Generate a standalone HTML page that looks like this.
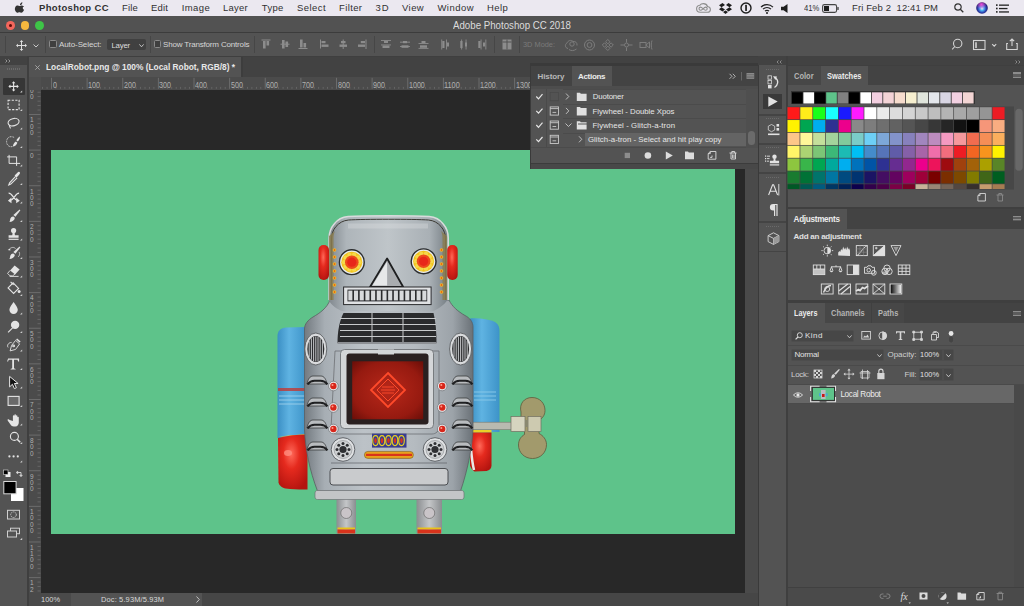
<!DOCTYPE html><html><head><meta charset="utf-8"><style>
*{margin:0;padding:0;box-sizing:border-box}
html,body{width:1024px;height:606px;overflow:hidden;background:#535353;font-family:"Liberation Sans",sans-serif}
.a{position:absolute}
.t{position:absolute;white-space:nowrap;line-height:1}
svg{position:absolute;overflow:visible}
</style></head><body>
<div class="a" style="left:0;top:0;width:1024px;height:16px;background:#ebe8f0"></div>
<svg style="left:14.5px;top:1.5px" width="10" height="12" viewBox="0 0 170 200"><path fill="#333" d="M150 68c-9 6-17 16-17 31 0 18 12 27 22 31-3 9-8 18-14 27-9 12-18 24-32 24s-18-8-34-8c-16 0-21 8-34 8-14 0-23-12-32-25C-3 140-8 105 8 80c8-13 22-21 36-21 14 0 23 9 34 9 11 0 18-9 35-9 13 0 28 7 37 19zM115 35c7-9 12-21 11-33-10 1-23 7-30 16-7 8-13 20-11 32 11 1 23-6 30-15z"/></svg>
<div class="t" id="t0" style="letter-spacing:0.331px;left:39px;top:3.16px;font-size:9.49px;color:#303030;font-weight:bold;">Photoshop CC</div>
<div class="t" id="t1" style="letter-spacing:0.134px;left:122px;top:3.16px;font-size:9.49px;color:#303030;">File</div>
<div class="t" id="t2" style="letter-spacing:0.219px;left:151px;top:3.16px;font-size:9.49px;color:#303030;">Edit</div>
<div class="t" id="t3" style="letter-spacing:0.406px;left:181.7px;top:3.16px;font-size:9.49px;color:#303030;">Image</div>
<div class="t" id="t4" style="letter-spacing:0.241px;left:223px;top:3.16px;font-size:9.49px;color:#303030;">Layer</div>
<div class="t" id="t5" style="letter-spacing:0.312px;left:261.8px;top:3.16px;font-size:9.49px;color:#303030;">Type</div>
<div class="t" id="t6" style="letter-spacing:0.465px;left:297px;top:3.16px;font-size:9.49px;color:#303030;">Select</div>
<div class="t" id="t7" style="letter-spacing:0.384px;left:339px;top:3.16px;font-size:9.49px;color:#303030;">Filter</div>
<div class="t" id="t8" style="letter-spacing:0.875px;left:375.5px;top:3.16px;font-size:9.49px;color:#303030;">3D</div>
<div class="t" id="t9" style="letter-spacing:0.436px;left:402px;top:3.16px;font-size:9.49px;color:#303030;">View</div>
<div class="t" id="t10" style="letter-spacing:0.473px;left:437.4px;top:3.16px;font-size:9.49px;color:#303030;">Window</div>
<div class="t" id="t11" style="letter-spacing:0.395px;left:487px;top:3.16px;font-size:9.49px;color:#303030;">Help</div>
<svg style="left:696px;top:3px" width="15" height="10" viewBox="0 0 15 10"><g fill="none" stroke="#8d8d8d" stroke-width="1.1"><path d="M4.2 9.3C2.2 9.3.6 7.8.6 5.8c0-1.9 1.4-3.3 3.1-3.5C4.6 1.2 5.9.6 7.4.6c2 0 3.6 1.2 4.1 2.9 1.6.2 2.9 1.5 2.9 3 0 1.6-1.3 2.8-3 2.8z"/><path d="M4.6 7.3a1.6 1.6 0 0 1 0-3.2c1.6 0 3.2 3.2 5 3.2a1.6 1.6 0 0 0 0-3.2c-1.8 0-3.4 3.2-5 3.2z"/></g></svg>
<svg style="left:718.5px;top:2.5px" width="13" height="11" viewBox="0 0 26 22"><path fill="#1e1e1e" d="M7 0L0 4.5 5 8.5 12 4zM19 0l7 4.5-5 4-7-4.5zM0 12.5L7 17l5-4-7-4.5zM26 12.5L19 17l-5-4 7-4.5zM8 18.2l5 3.8 5-3.8-5-3.3z"/></svg>
<svg style="left:739.5px;top:2px" width="12" height="12" viewBox="0 0 12 12"><circle cx="6" cy="6" r="5" fill="none" stroke="#1e1e1e" stroke-width="1.4"/><rect x="5.2" y="2.8" width="1.7" height="6.3" rx=".5" fill="#1e1e1e"/></svg>
<svg style="left:760px;top:2.5px" width="14" height="11" viewBox="0 0 14 11"><g fill="none" stroke="#1e1e1e" stroke-width="1.2"><path d="M1 4.2a8.5 8.5 0 0 1 12 0"/><path d="M3 6.2a5.6 5.6 0 0 1 8 0"/><path d="M5 8.2a2.8 2.8 0 0 1 4 0"/></g><circle cx="7" cy="10" r="1" fill="#1e1e1e"/></svg>
<svg style="left:781px;top:3.5px" width="8" height="9" viewBox="0 0 8 9"><path fill="#1e1e1e" d="M0 2.8h2.6L6.5 0v9L2.6 6.2H0z"/></svg>
<div class="t" id="t12" style="transform:scaleX(0.8567);transform-origin:0 0;left:803.5px;top:3.72px;font-size:8.93px;color:#303030;">41%</div>
<svg style="left:822px;top:3.5px" width="17" height="9" viewBox="0 0 17 9"><rect x=".6" y=".6" width="14" height="7.8" rx="1.8" fill="none" stroke="#444" stroke-width="1.1"/><rect x="2" y="2" width="5" height="5" fill="#1e1e1e"/><rect x="15.3" y="3" width="1.4" height="3" rx=".5" fill="#444"/></svg>
<div class="t" id="t13" style="letter-spacing:0.121px;left:852px;top:3.16px;font-size:9.49px;color:#303030;">Fri Feb 2&nbsp;&nbsp;12:41 PM</div>
<svg style="left:953.5px;top:3px" width="10" height="10" viewBox="0 0 10 10"><circle cx="4" cy="4" r="3.2" fill="none" stroke="#333" stroke-width="1.2"/><path d="M6.3 6.3L9.3 9.3" stroke="#333" stroke-width="1.3"/></svg>
<svg style="left:975.5px;top:2px" width="12" height="12" viewBox="0 0 12 12"><defs><radialGradient id="sg" cx=".5" cy=".55" r=".55"><stop offset="0" stop-color="#e8f8ff"/><stop offset=".3" stop-color="#4fb6f0"/><stop offset=".65" stop-color="#2a3fb0"/><stop offset="1" stop-color="#1a1450"/></radialGradient><radialGradient id="sg2" cx=".45" cy=".2" r=".45"><stop offset="0" stop-color="#ff4fd8" stop-opacity=".9"/><stop offset="1" stop-color="#ff4fd8" stop-opacity="0"/></radialGradient></defs><circle cx="6" cy="6" r="5.8" fill="url(#sg)"/><circle cx="6" cy="6" r="5.8" fill="url(#sg2)"/></svg>
<svg style="left:996px;top:3.5px" width="13" height="9" viewBox="0 0 13 9"><g fill="#222"><rect x="0" y="0.3" width="1.6" height="1.6"/><rect x="0" y="3.7" width="1.6" height="1.6"/><rect x="0" y="7.1" width="1.6" height="1.6"/><rect x="3" y=".5" width="10" height="1.3"/><rect x="3" y="3.9" width="8.5" height="1.3"/><rect x="3" y="7.3" width="10" height="1.3"/></g></svg>
<div class="a" style="left:0;top:16px;width:1024px;height:17px;background:#525252;border-bottom:1px solid #3c3c3c;border-radius:4px 4px 0 0"></div>
<div class="a" style="left:6.1px;top:21.1px;width:8.8px;height:8.8px;border-radius:50%;background:#f4665c"></div>
<div class="a" style="left:20.6px;top:21.1px;width:8.8px;height:8.8px;border-radius:50%;background:#f6b83e"></div>
<div class="a" style="left:34.9px;top:21.1px;width:8.8px;height:8.8px;border-radius:50%;background:#3ec547"></div>
<div class="a" style="left:8.9px;top:23.9px;width:3.2px;height:3.2px;border-radius:50%;background:#5a0a06"></div>
<div class="t" id="t14" style="transform:scaleX(0.9513);transform-origin:0 0;left:453px;top:21.00px;font-size:10.20px;color:#dcdcdc;">Adobe Photoshop CC 2018</div>
<div class="a" style="left:0;top:33px;width:1024px;height:23px;background:#535353"></div>
<div class="a" style="left:4.5px;top:36px;width:1px;height:17px;background:#464646"></div>
<div class="a" style="left:44.5px;top:36px;width:1px;height:17px;background:#464646"></div>
<div class="a" style="left:150px;top:36px;width:1px;height:17px;background:#464646"></div>
<div class="a" style="left:254px;top:36px;width:1px;height:17px;background:#464646"></div>
<div class="a" style="left:374px;top:36px;width:1px;height:17px;background:#464646"></div>
<div class="a" style="left:494px;top:36px;width:1px;height:17px;background:#464646"></div>
<div class="a" style="left:519px;top:36px;width:1px;height:17px;background:#464646"></div>
<svg style="left:16px;top:39.5px" width="11" height="11" viewBox="0 0 11 11"><g fill="#dedede"><path d="M5.5 0L7.3 2H3.7zM5.5 11L7.3 9H3.7zM0 5.5L2 3.7V7.3zM11 5.5L9 3.7V7.3z"/></g><path d="M5.5 1.5V9.5M1.5 5.5H9.5" stroke="#dedede" stroke-width="1"/></svg>
<svg style="left:32.5px;top:43.5px" width="6" height="4" viewBox="0 0 6 4"><path d="M.5.5L3 3 5.5.5" fill="none" stroke="#c8c8c8" stroke-width="1"/></svg>
<div class="a" style="left:49px;top:40.2px;width:7.5px;height:7.5px;border:1px solid #8a8a8a;border-radius:1.5px;background:#3f3f3f"></div>
<div class="t" id="t15" style="letter-spacing:-0.098px;left:59px;top:40.97px;font-size:8.00px;color:#d6d6d6;">Auto-Select:</div>
<div class="a" style="left:106.5px;top:38.8px;width:39.5px;height:11.5px;background:#404040;border-radius:2px"></div>
<div class="t" id="t16" style="letter-spacing:-0.229px;left:111.5px;top:41.66px;font-size:7.81px;color:#dcdcdc;">Layer</div>
<svg style="left:138.5px;top:44px" width="5" height="3.5" viewBox="0 0 5 3.5"><path d="M.4.4L2.5 2.8 4.6.4" fill="none" stroke="#cfcfcf" stroke-width=".9"/></svg>
<div class="a" style="left:153.5px;top:40.2px;width:7.5px;height:7.5px;border:1px solid #8a8a8a;border-radius:1.5px;background:#3f3f3f"></div>
<div class="t" id="t17" style="letter-spacing:-0.171px;left:163px;top:40.97px;font-size:8.00px;color:#d6d6d6;">Show Transform Controls</div>
<svg style="left:0;top:0" width="1024" height="60"><g transform="translate(261.5,39.5)"><rect x="0" y="0" width="9" height="1" fill="#8c8c8c"/><rect x="1.5" y="1.5" width="2.6" height="7.5" fill="#8c8c8c"/><rect x="5" y="1.5" width="2.6" height="4.5" fill="#8c8c8c"/></g><g transform="translate(280.5,39.5)"><rect x="0" y="4.2" width="9" height="1" fill="#8c8c8c"/><rect x="1.5" y="0.5" width="2.6" height="8.5" fill="#8c8c8c"/><rect x="5" y="2" width="2.6" height="5.5" fill="#8c8c8c"/></g><g transform="translate(298.5,39.5)"><rect x="0" y="8.5" width="9" height="1" fill="#8c8c8c"/><rect x="1.5" y="0" width="2.6" height="8" fill="#8c8c8c"/><rect x="5" y="3.5" width="2.6" height="4.5" fill="#8c8c8c"/></g><g transform="translate(320,39.5)"><rect x="0" y="0" width="1" height="9" fill="#8c8c8c"/><rect x="1.5" y="1.5" width="4" height="2.2" fill="#8c8c8c"/><rect x="1.5" y="5" width="7" height="2.4" fill="#8c8c8c"/></g><g transform="translate(338.5,39.5)"><rect x="4.2" y="0" width="1" height="9.5" fill="#8c8c8c"/><rect x="2.5" y="1.5" width="4.5" height="2.2" fill="#8c8c8c"/><rect x="1" y="5" width="7.5" height="2.4" fill="#8c8c8c"/></g><g transform="translate(357,39.5)"><rect x="8.5" y="0" width="1" height="9.5" fill="#8c8c8c"/><rect x="3.8" y="1.5" width="4.2" height="2.2" fill="#8c8c8c"/><rect x="1" y="5" width="7" height="2.4" fill="#8c8c8c"/></g><g transform="translate(381,39.5)"><rect x="0" y="0.5" width="10" height=".9" fill="#8c8c8c"/><rect x="3" y="1.5" width="4" height="2" fill="#8c8c8c"/><rect x="0" y="5" width="10" height=".9" fill="#8c8c8c"/><rect x="1.5" y="6" width="7" height="2.5" fill="#8c8c8c"/></g><g transform="translate(400,39.5)"><rect x="0" y="2.2" width="10" height=".9" fill="#8c8c8c"/><rect x="3" y="1.5" width="4" height="2.2" fill="#8c8c8c"/><rect x="0" y="6.6" width="10" height=".9" fill="#8c8c8c"/><rect x="1.5" y="5.8" width="7" height="2.5" fill="#8c8c8c"/></g><g transform="translate(418.5,39.5)"><rect x="0" y="3.6" width="10" height=".9" fill="#8c8c8c"/><rect x="3" y="1.5" width="4" height="2" fill="#8c8c8c"/><rect x="0" y="8.4" width="10" height=".9" fill="#8c8c8c"/><rect x="1.5" y="5.8" width="7" height="2.5" fill="#8c8c8c"/></g><g transform="translate(441,39.5)"><rect x=".3" y="0" width=".9" height="10" fill="#8c8c8c"/><rect x="1.3" y="1.5" width="2.2" height="7" fill="#8c8c8c"/><rect x="5" y="0" width=".9" height="10" fill="#8c8c8c"/><rect x="6" y="3" width="2" height="4" fill="#8c8c8c"/></g><g transform="translate(459,39.5)"><rect x="2.2" y="0" width=".9" height="10" fill="#8c8c8c"/><rect x="1.3" y="1.5" width="2.2" height="7" fill="#8c8c8c"/><rect x="6.6" y="0" width=".9" height="10" fill="#8c8c8c"/><rect x="6" y="3" width="2" height="4" fill="#8c8c8c"/></g><g transform="translate(477,39.5)"><rect x="3.6" y="0" width=".9" height="10" fill="#8c8c8c"/><rect x="1.3" y="1.5" width="2.2" height="7" fill="#8c8c8c"/><rect x="8.4" y="0" width=".9" height="10" fill="#8c8c8c"/><rect x="6" y="3" width="2" height="4" fill="#8c8c8c"/></g><g transform="translate(502.5,39.5)"><rect x="0" y="0" width="9" height="10" fill="#8c8c8c"/><rect x="0" y="2" width="9" height="1" fill="#535353"/><rect x="4" y="0" width="1" height="10" fill="#535353"/></g></svg>
<div class="t" id="t18" style="transform:scaleX(0.9225);transform-origin:0 0;left:523px;top:41.47px;font-size:8.00px;color:#7a7a7a;">3D Mode:</div>
<svg style="left:564px;top:38px" width="90" height="14" viewBox="0 0 90 14"><g fill="none" stroke="#7c7c7c" stroke-width="1"><path d="M4 10.5c-3-.5-3.5-4-1-5.5 1-2.5 4-3.5 6-1.5 2.5-.5 4.5 1.5 4 4M5 11.5c2 1.5 5 1.5 7.5-.5"/><circle cx="8" cy="6" r="2.2"/><circle cx="25.5" cy="7" r="5"/><circle cx="25.5" cy="7" r="2.4"/><path d="M43.8 1.5l2.2 2.2-2.2 2.2-2.2-2.2zM43.8 8.1l2.2 2.2-2.2 2.2-2.2-2.2zM40.5 4.8l2.2 2.2-2.2 2.2-2.2-2.2zM47.1 4.8l2.2 2.2-2.2 2.2-2.2-2.2z"/><circle cx="62.5" cy="7" r="2"/><path d="M62.5 1v3.5M62.5 9.5V13M56.5 7H60M65 7h3.5"/><rect x="76" y="4.5" width="6" height="5"/><path d="M82 7l3.5-3v6zM88 2.5c-1 2.5-1 6.5 0 9"/></g></svg>
<svg style="left:951px;top:37.5px" width="72" height="13" viewBox="0 0 72 13"><g fill="none" stroke="#d4d4d4" stroke-width="1.1"><circle cx="6.7" cy="5.5" r="4.2"/><path d="M3.8 8.5L1.2 11.3"/><rect x="22.5" y="2.5" width="11.5" height="9"/><path d="M25 4.2v5.8" stroke-width="1.6"/><path d="M41.2 6.2l2 2 2-2"/><path d="M57 5.5h-1.3v6h10.5v-6H65M61 1v7M58.8 3.2L61 1l2.2 2.2"/></g></svg>
<div class="a" style="left:0;top:56px;width:1024px;height:550px;background:#3f3f3f"></div>
<div class="a" style="left:0;top:56px;width:27px;height:550px;background:#535353"></div>
<div class="a" style="left:0;top:56px;width:27px;height:9px;background:#424242"></div>
<svg style="left:4.5px;top:58.5px" width="6" height="4" viewBox="0 0 6 4"><path d="M.5.5L2 2 .5 3.5M3.5.5L5 2 3.5 3.5" fill="none" stroke="#aaa" stroke-width=".8"/></svg>
<div class="a" style="left:7px;top:67.5px;width:14px;height:2px;background:repeating-linear-gradient(90deg,#6a6a6a 0 1px,transparent 1px 2px)"></div>
<div class="a" style="left:3px;top:78px;width:21.5px;height:16.7px;background:#363636;border-radius:1px"></div>
<svg style="left:0;top:0" width="28" height="606"><g fill="none" stroke="#e4e4e4" stroke-width="1.1"><path d="M13.6 82.4V90.4M9.6 86.4H17.6"/><rect x="8.1" y="100.2" width="11" height="9.4" stroke-dasharray="2.2 1.4"/><ellipse cx="13.9" cy="122.2" rx="5.6" ry="3.6" transform="rotate(-15 13.6 123.4)"/><path d="M9.6 124.9c-.5 1.5.3 2.5 1 3.5"/><path d="M14.1 137.4c-1-.5-2-.7-3-.7-2.8 0-4.5 2.3-4.5 5s1.7 5 4.5 5c.6 0 1.2-.1 1.8-.3" stroke-width=".8" stroke-dasharray="1 .6"/><path d="M9.1 154.9V163.4H20.1M7.1 156.9H16.6V165.9" stroke-width="1"/><path d="M15.6 176.4l-6 6.5-.8 2 2-.8 6.3-6.2"/><path d="M8.6 193.20000000000002c4 0 5 6.5 8.5 7M19.1 193.20000000000002c-4 0-5 6.5-8.5 7" stroke-width="1.3"/><path d="M9.6 248.9c2-2 5-2 6 0M19.1 251.9c1 2 .5 4-1 5" stroke-width=".7"/><path d="M10.1 270.4l-2.5 3 2.5 2.5h2.5l2.5-2M9.6 276.4h9" stroke-width=".9"/><path d="M8.1 287.9l5-5 5.5 5.5-5 5z"/><path d="M10.6 281.9l3 3"/><path d="M12.6 327.9l-4.5 4.5"/><path d="M15.6 340.4l4 3.5-4 5.5-5.5 1.5 1.5-5.5zM11.6 342.4c-3 0-5 3-3.5 5" stroke-width=".9"/><circle cx="13.6" cy="345.9" r=".9"/><rect x="8.1" y="396.4" width="11" height="9" fill="#6a6a6a"/><circle cx="14.4" cy="436.4" r="4"/><path d="M17.2 439.2l3 3" stroke-width="1.6"/></g><g fill="#e4e4e4"><path d="M13.6 81.2l1.8 2h-3.6zM13.6 91.60000000000001l1.8-2h-3.6zM8.399999999999999 86.4l2 1.8v-3.6zM18.8 86.4l-2 1.8v-3.6z"/><path d="M19.8 136.4c.4 1.5-.5 3.5-2 5l-1.5-1.2c1.2-1.6 2.5-3.3 3.5-3.8z"/><path d="M15.8 141.4l1.6 1.3c-.8 2.2-2.6 3.7-4.5 3.8.1-2 1.2-4 2.9-5.1z"/><path d="M14.6 175.4l3-3c1-1 2.2-.5 2.3.2.3 1-.2 1.6-1 2.4l-2.5 2.7z"/><path d="M19.8 200.8l-3.6-3.2v5.6zM7.8999999999999995 200.8l3.6-3.2v5.6z"/><path d="M19.6 209.4l.8.8-5 6.5-2-1.8z"/><path d="M13.1 216.4c1 .2 2 1.2 1.5 2.5-.6 1.6-2.6 2.8-5.2 3 .8-1 .6-2.2 1-3.3.6-1.5 1.6-2.3 2.7-2.2z"/><circle cx="13.6" cy="230.6" r="2.6"/><path d="M12.6 232.4h2l.3 2.8h3.7v2.5h-10v-2.5h3.7z"/><rect x="8.6" y="238.70000000000002" width="10" height="1.2"/><path d="M19.6 246.4l.8.8-5 6.5-2-1.8z"/><path d="M13.1 253.4c1 .2 2 1.2 1.5 2.5-.6 1.6-2.6 2.8-5.2 3 .8-1 .6-2.2 1-3.3.6-1.5 1.6-2.3 2.7-2.2z"/><path d="M7.6 249.9l2.5-1.5.3 2z"/><path d="M14.6 265.4l5 4-4.5 5-5-4z"/><circle cx="19.1" cy="291.4" r="1.5"/><path d="M13.6 301.9c1.8 3 4.2 5.2 4.2 7.8a4.2 4.2 0 0 1-8.4 0c0-2.6 2.4-4.8 4.2-7.8z"/><circle cx="15.1" cy="324.9" r="4.2"/><path d="M17.1 338.4l3.5 3-1 1-3.5-3z"/><path d="M8.1 358.4h11v3h-1l-.6-1.6h-3.5v8.5l1.6.6v.7h-5v-.7l1.6-.6v-8.5h-3.5l-.6 1.6h-1z"/><path d="M9.6 419.9c-1-1-2.6-.5-1.8.8l2.5 3.5c1 1.5 2 2.2 3.5 2.2h1.5c2.2 0 3.5-1.8 3.5-4v-5c0-.9-1.4-.9-1.4 0v-1.5c0-.9-1.5-.9-1.5 0v-1c0-.9-1.5-.9-1.5 0v1c0-.9-1.5-.9-1.5 0v5z"/><circle cx="9.399999999999999" cy="456.4" r="1.1"/><circle cx="13.6" cy="456.4" r="1.1"/><circle cx="17.8" cy="456.4" r="1.1"/></g><path d="M9.6 376.4v10.5l2.8-2.6 2 4.3 2-.9-2-4.2h3.7z" fill="#111" stroke="#e4e4e4" stroke-width="1"/><path d="M22.2 92.60000000000001h-2.2l2.2-2.2z" fill="#cfcfcf"/><path d="M22.2 111.10000000000001h-2.2l2.2-2.2z" fill="#cfcfcf"/><path d="M22.2 129.6h-2.2l2.2-2.2z" fill="#cfcfcf"/><path d="M22.2 148.1h-2.2l2.2-2.2z" fill="#cfcfcf"/><path d="M22.2 166.6h-2.2l2.2-2.2z" fill="#cfcfcf"/><path d="M22.2 185.1h-2.2l2.2-2.2z" fill="#cfcfcf"/><path d="M22.2 203.6h-2.2l2.2-2.2z" fill="#cfcfcf"/><path d="M22.2 222.1h-2.2l2.2-2.2z" fill="#cfcfcf"/><path d="M22.2 240.6h-2.2l2.2-2.2z" fill="#cfcfcf"/><path d="M22.2 259.1h-2.2l2.2-2.2z" fill="#cfcfcf"/><path d="M22.2 277.59999999999997h-2.2l2.2-2.2z" fill="#cfcfcf"/><path d="M22.2 296.09999999999997h-2.2l2.2-2.2z" fill="#cfcfcf"/><path d="M22.2 314.59999999999997h-2.2l2.2-2.2z" fill="#cfcfcf"/><path d="M22.2 333.09999999999997h-2.2l2.2-2.2z" fill="#cfcfcf"/><path d="M22.2 351.59999999999997h-2.2l2.2-2.2z" fill="#cfcfcf"/><path d="M22.2 370.09999999999997h-2.2l2.2-2.2z" fill="#cfcfcf"/><path d="M22.2 388.59999999999997h-2.2l2.2-2.2z" fill="#cfcfcf"/><path d="M22.2 407.09999999999997h-2.2l2.2-2.2z" fill="#cfcfcf"/><path d="M22.2 425.59999999999997h-2.2l2.2-2.2z" fill="#cfcfcf"/><path d="M22.2 444.09999999999997h-2.2l2.2-2.2z" fill="#cfcfcf"/><path d="M22.2 462.59999999999997h-2.2l2.2-2.2z" fill="#cfcfcf"/><rect x="5.5" y="472" width="5" height="5" fill="#eee"/><rect x="3.5" y="470" width="4.5" height="4.5" fill="#000" stroke="#ddd" stroke-width=".6"/><path d="M17 472.5h4v3.5M16.2 472.5l1.5-1.2v2.4zM21 476.7l-1.2-1.5h2.4z" fill="none" stroke="#ddd" stroke-width=".9"/><rect x="11" y="488" width="12.5" height="13" fill="#fff"/><rect x="3.8" y="481.5" width="12.3" height="12.3" fill="#000" stroke="#d8d8d8" stroke-width="1"/><g fill="none" stroke="#cfcfcf" stroke-width="1"><rect x="7.5" y="510.3" width="12" height="8.7"/><circle cx="13.5" cy="514.7" r="2.8" stroke-dasharray="1.2 .8"/><rect x="10.5" y="528.2" width="9" height="5.5"/><rect x="7.5" y="531" width="9" height="6" fill="#535353"/></g><path d="M22.2 540h-2.2l2.2-2.2z" fill="#cfcfcf"/></svg>
<div class="a" style="left:27px;top:56px;width:2px;height:550px;background:#3f3f3f"></div>
<div class="a" style="left:29px;top:57px;width:729px;height:20px;background:#424242"></div>
<div class="a" style="left:29px;top:57px;width:212px;height:20px;background:#535353"></div>
<div class="a" style="left:241px;top:57px;width:2px;height:20px;background:#3d3d3d"></div>
<svg style="left:34.5px;top:64.7px" width="5" height="5" viewBox="0 0 5 5"><path d="M.3.3l4.4 4.4M4.7.3L.3 4.7" stroke="#a8a8a8" stroke-width=".9"/></svg>
<div class="t" id="t19" style="transform:scaleX(0.9063);transform-origin:0 0;left:46px;top:62.80px;font-size:9.20px;color:#e8e8e8;font-weight:bold;">LocalRobot.png @ 100% (Local Robot, RGB/8) *</div>
<div class="a" style="left:29px;top:77px;width:716px;height:13px;background:#4b4b4b"></div>
<div class="a" style="left:29px;top:77px;width:12px;height:516px;background:#4b4b4b"></div>
<div class="a" style="left:29px;top:77px;width:12px;height:13px;background:#4f4f4f"></div>
<svg style="left:0;top:0" width="1024" height="606"><g fill="#6c6c6c"><rect x="42.19" y="86.9" width=".8" height="1.9"/><rect x="46.65" y="86.9" width=".8" height="1.9"/><rect x="51.00" y="77.8" width="1" height="11"/><rect x="55.55" y="86.9" width=".8" height="1.9"/><rect x="60.01" y="86.9" width=".8" height="1.9"/><rect x="64.46" y="86.9" width=".8" height="1.9"/><rect x="68.91" y="86.9" width=".8" height="1.9"/><rect x="73.37" y="86.9" width=".8" height="1.9"/><rect x="77.82" y="86.9" width=".8" height="1.9"/><rect x="82.27" y="86.9" width=".8" height="1.9"/><rect x="86.62" y="77.8" width="1" height="11"/><rect x="91.18" y="86.9" width=".8" height="1.9"/><rect x="95.63" y="86.9" width=".8" height="1.9"/><rect x="100.08" y="86.9" width=".8" height="1.9"/><rect x="104.54" y="86.9" width=".8" height="1.9"/><rect x="108.99" y="86.9" width=".8" height="1.9"/><rect x="113.44" y="86.9" width=".8" height="1.9"/><rect x="117.90" y="86.9" width=".8" height="1.9"/><rect x="122.25" y="77.8" width="1" height="11"/><rect x="126.80" y="86.9" width=".8" height="1.9"/><rect x="131.26" y="86.9" width=".8" height="1.9"/><rect x="135.71" y="86.9" width=".8" height="1.9"/><rect x="140.16" y="86.9" width=".8" height="1.9"/><rect x="144.62" y="86.9" width=".8" height="1.9"/><rect x="149.07" y="86.9" width=".8" height="1.9"/><rect x="153.52" y="86.9" width=".8" height="1.9"/><rect x="157.88" y="77.8" width="1" height="11"/><rect x="162.43" y="86.9" width=".8" height="1.9"/><rect x="166.88" y="86.9" width=".8" height="1.9"/><rect x="171.33" y="86.9" width=".8" height="1.9"/><rect x="175.79" y="86.9" width=".8" height="1.9"/><rect x="180.24" y="86.9" width=".8" height="1.9"/><rect x="184.69" y="86.9" width=".8" height="1.9"/><rect x="189.15" y="86.9" width=".8" height="1.9"/><rect x="193.50" y="77.8" width="1" height="11"/><rect x="198.05" y="86.9" width=".8" height="1.9"/><rect x="202.51" y="86.9" width=".8" height="1.9"/><rect x="206.96" y="86.9" width=".8" height="1.9"/><rect x="211.41" y="86.9" width=".8" height="1.9"/><rect x="215.87" y="86.9" width=".8" height="1.9"/><rect x="220.32" y="86.9" width=".8" height="1.9"/><rect x="224.77" y="86.9" width=".8" height="1.9"/><rect x="229.12" y="77.8" width="1" height="11"/><rect x="233.68" y="86.9" width=".8" height="1.9"/><rect x="238.13" y="86.9" width=".8" height="1.9"/><rect x="242.58" y="86.9" width=".8" height="1.9"/><rect x="247.04" y="86.9" width=".8" height="1.9"/><rect x="251.49" y="86.9" width=".8" height="1.9"/><rect x="255.94" y="86.9" width=".8" height="1.9"/><rect x="260.40" y="86.9" width=".8" height="1.9"/><rect x="264.75" y="77.8" width="1" height="11"/><rect x="269.30" y="86.9" width=".8" height="1.9"/><rect x="273.76" y="86.9" width=".8" height="1.9"/><rect x="278.21" y="86.9" width=".8" height="1.9"/><rect x="282.66" y="86.9" width=".8" height="1.9"/><rect x="287.12" y="86.9" width=".8" height="1.9"/><rect x="291.57" y="86.9" width=".8" height="1.9"/><rect x="296.02" y="86.9" width=".8" height="1.9"/><rect x="300.38" y="77.8" width="1" height="11"/><rect x="304.93" y="86.9" width=".8" height="1.9"/><rect x="309.38" y="86.9" width=".8" height="1.9"/><rect x="313.83" y="86.9" width=".8" height="1.9"/><rect x="318.29" y="86.9" width=".8" height="1.9"/><rect x="322.74" y="86.9" width=".8" height="1.9"/><rect x="327.19" y="86.9" width=".8" height="1.9"/><rect x="331.65" y="86.9" width=".8" height="1.9"/><rect x="336.00" y="77.8" width="1" height="11"/><rect x="340.55" y="86.9" width=".8" height="1.9"/><rect x="345.01" y="86.9" width=".8" height="1.9"/><rect x="349.46" y="86.9" width=".8" height="1.9"/><rect x="353.91" y="86.9" width=".8" height="1.9"/><rect x="358.37" y="86.9" width=".8" height="1.9"/><rect x="362.82" y="86.9" width=".8" height="1.9"/><rect x="367.27" y="86.9" width=".8" height="1.9"/><rect x="371.62" y="77.8" width="1" height="11"/><rect x="376.18" y="86.9" width=".8" height="1.9"/><rect x="380.63" y="86.9" width=".8" height="1.9"/><rect x="385.08" y="86.9" width=".8" height="1.9"/><rect x="389.54" y="86.9" width=".8" height="1.9"/><rect x="393.99" y="86.9" width=".8" height="1.9"/><rect x="398.44" y="86.9" width=".8" height="1.9"/><rect x="402.90" y="86.9" width=".8" height="1.9"/><rect x="407.25" y="77.8" width="1" height="11"/><rect x="411.80" y="86.9" width=".8" height="1.9"/><rect x="416.26" y="86.9" width=".8" height="1.9"/><rect x="420.71" y="86.9" width=".8" height="1.9"/><rect x="425.16" y="86.9" width=".8" height="1.9"/><rect x="429.62" y="86.9" width=".8" height="1.9"/><rect x="434.07" y="86.9" width=".8" height="1.9"/><rect x="438.52" y="86.9" width=".8" height="1.9"/><rect x="442.88" y="77.8" width="1" height="11"/><rect x="447.43" y="86.9" width=".8" height="1.9"/><rect x="451.88" y="86.9" width=".8" height="1.9"/><rect x="456.33" y="86.9" width=".8" height="1.9"/><rect x="460.79" y="86.9" width=".8" height="1.9"/><rect x="465.24" y="86.9" width=".8" height="1.9"/><rect x="469.69" y="86.9" width=".8" height="1.9"/><rect x="474.15" y="86.9" width=".8" height="1.9"/><rect x="478.50" y="77.8" width="1" height="11"/><rect x="483.05" y="86.9" width=".8" height="1.9"/><rect x="487.51" y="86.9" width=".8" height="1.9"/><rect x="491.96" y="86.9" width=".8" height="1.9"/><rect x="496.41" y="86.9" width=".8" height="1.9"/><rect x="500.87" y="86.9" width=".8" height="1.9"/><rect x="505.32" y="86.9" width=".8" height="1.9"/><rect x="509.77" y="86.9" width=".8" height="1.9"/><rect x="514.12" y="77.8" width="1" height="11"/><rect x="518.68" y="86.9" width=".8" height="1.9"/><rect x="523.13" y="86.9" width=".8" height="1.9"/><rect x="527.58" y="86.9" width=".8" height="1.9"/><rect x="532.04" y="86.9" width=".8" height="1.9"/><rect x="536.49" y="86.9" width=".8" height="1.9"/><rect x="540.94" y="86.9" width=".8" height="1.9"/><rect x="545.40" y="86.9" width=".8" height="1.9"/><rect x="549.75" y="77.8" width="1" height="11"/><rect x="554.30" y="86.9" width=".8" height="1.9"/><rect x="558.76" y="86.9" width=".8" height="1.9"/><rect x="563.21" y="86.9" width=".8" height="1.9"/><rect x="567.66" y="86.9" width=".8" height="1.9"/><rect x="572.12" y="86.9" width=".8" height="1.9"/><rect x="576.57" y="86.9" width=".8" height="1.9"/><rect x="581.02" y="86.9" width=".8" height="1.9"/><rect x="585.38" y="77.8" width="1" height="11"/><rect x="589.93" y="86.9" width=".8" height="1.9"/><rect x="594.38" y="86.9" width=".8" height="1.9"/><rect x="598.83" y="86.9" width=".8" height="1.9"/><rect x="603.29" y="86.9" width=".8" height="1.9"/><rect x="607.74" y="86.9" width=".8" height="1.9"/><rect x="612.19" y="86.9" width=".8" height="1.9"/><rect x="616.65" y="86.9" width=".8" height="1.9"/><rect x="621.00" y="77.8" width="1" height="11"/><rect x="625.55" y="86.9" width=".8" height="1.9"/><rect x="630.01" y="86.9" width=".8" height="1.9"/><rect x="634.46" y="86.9" width=".8" height="1.9"/><rect x="638.91" y="86.9" width=".8" height="1.9"/><rect x="643.37" y="86.9" width=".8" height="1.9"/><rect x="647.82" y="86.9" width=".8" height="1.9"/><rect x="652.27" y="86.9" width=".8" height="1.9"/><rect x="656.62" y="77.8" width="1" height="11"/><rect x="661.18" y="86.9" width=".8" height="1.9"/><rect x="665.63" y="86.9" width=".8" height="1.9"/><rect x="670.08" y="86.9" width=".8" height="1.9"/><rect x="674.54" y="86.9" width=".8" height="1.9"/><rect x="678.99" y="86.9" width=".8" height="1.9"/><rect x="683.44" y="86.9" width=".8" height="1.9"/><rect x="687.90" y="86.9" width=".8" height="1.9"/><rect x="692.25" y="77.8" width="1" height="11"/><rect x="696.80" y="86.9" width=".8" height="1.9"/><rect x="701.26" y="86.9" width=".8" height="1.9"/><rect x="705.71" y="86.9" width=".8" height="1.9"/><rect x="710.16" y="86.9" width=".8" height="1.9"/><rect x="714.62" y="86.9" width=".8" height="1.9"/><rect x="719.07" y="86.9" width=".8" height="1.9"/><rect x="723.52" y="86.9" width=".8" height="1.9"/><rect x="727.88" y="77.8" width="1" height="11"/><rect x="732.43" y="86.9" width=".8" height="1.9"/><rect x="736.88" y="86.9" width=".8" height="1.9"/><rect x="741.33" y="86.9" width=".8" height="1.9"/></g></svg>
<div class="t" id="t20" style="transform:scaleX(0.8658);transform-origin:0 0;left:52.6px;top:82.20px;font-size:8.20px;color:#b0b0b0;">0</div>
<div class="t" id="t21" style="transform:scaleX(0.8667);transform-origin:0 0;left:88.22500000000001px;top:82.20px;font-size:8.20px;color:#b0b0b0;">100</div>
<div class="t" id="t22" style="transform:scaleX(0.8667);transform-origin:0 0;left:123.85000000000001px;top:82.20px;font-size:8.20px;color:#b0b0b0;">200</div>
<div class="t" id="t23" style="transform:scaleX(0.8667);transform-origin:0 0;left:159.475px;top:82.20px;font-size:8.20px;color:#b0b0b0;">300</div>
<div class="t" id="t24" style="transform:scaleX(0.8667);transform-origin:0 0;left:195.1px;top:82.20px;font-size:8.20px;color:#b0b0b0;">400</div>
<div class="t" id="t25" style="transform:scaleX(0.8667);transform-origin:0 0;left:230.725px;top:82.20px;font-size:8.20px;color:#b0b0b0;">500</div>
<div class="t" id="t26" style="transform:scaleX(0.8667);transform-origin:0 0;left:266.34999999999997px;top:82.20px;font-size:8.20px;color:#b0b0b0;">600</div>
<div class="t" id="t27" style="transform:scaleX(0.8667);transform-origin:0 0;left:301.97499999999997px;top:82.20px;font-size:8.20px;color:#b0b0b0;">700</div>
<div class="t" id="t28" style="transform:scaleX(0.8667);transform-origin:0 0;left:337.59999999999997px;top:82.20px;font-size:8.20px;color:#b0b0b0;">800</div>
<div class="t" id="t29" style="transform:scaleX(0.8667);transform-origin:0 0;left:373.22499999999997px;top:82.20px;font-size:8.20px;color:#b0b0b0;">900</div>
<div class="t" id="t30" style="transform:scaleX(0.8672);transform-origin:0 0;left:408.84999999999997px;top:82.20px;font-size:8.20px;color:#b0b0b0;">1000</div>
<div class="t" id="t31" style="transform:scaleX(0.8972);transform-origin:0 0;left:444.47499999999997px;top:82.20px;font-size:8.20px;color:#b0b0b0;">1100</div>
<div class="t" id="t32" style="transform:scaleX(0.8672);transform-origin:0 0;left:480.09999999999997px;top:82.20px;font-size:8.20px;color:#b0b0b0;">1200</div>
<div class="t" id="t33" style="transform:scaleX(0.8672);transform-origin:0 0;left:515.725px;top:82.20px;font-size:8.20px;color:#b0b0b0;">1300</div>
<div class="t" id="t34" style="transform:scaleX(0.8672);transform-origin:0 0;left:551.35px;top:82.20px;font-size:8.20px;color:#b0b0b0;">1400</div>
<div class="t" id="t35" style="transform:scaleX(0.8672);transform-origin:0 0;left:586.975px;top:82.20px;font-size:8.20px;color:#b0b0b0;">1500</div>
<div class="t" id="t36" style="transform:scaleX(0.8672);transform-origin:0 0;left:622.6px;top:82.20px;font-size:8.20px;color:#b0b0b0;">1600</div>
<div class="t" id="t37" style="transform:scaleX(0.8672);transform-origin:0 0;left:658.225px;top:82.20px;font-size:8.20px;color:#b0b0b0;">1700</div>
<div class="t" id="t38" style="transform:scaleX(0.8672);transform-origin:0 0;left:693.85px;top:82.20px;font-size:8.20px;color:#b0b0b0;">1800</div>
<div class="t" id="t39" style="transform:scaleX(0.8672);transform-origin:0 0;left:729.475px;top:82.20px;font-size:8.20px;color:#b0b0b0;">1900</div>
<div class="a" style="left:29px;top:90px;width:12px;height:503px;overflow:hidden"><svg style="left:0;top:0" width="12" height="503"><g fill="#6c6c6c"><rect x="8.5" y="-29.36" width="3" height=".8"/><rect x="8.5" y="-24.91" width="3" height=".8"/><rect x="8.5" y="-20.46" width="3" height=".8"/><rect x="8.5" y="-16.00" width="3" height=".8"/><rect x="-0.4" y="-11.65" width="11.9" height="1"/><rect x="8.5" y="-7.10" width="3" height=".8"/><rect x="8.5" y="-2.64" width="3" height=".8"/><rect x="8.5" y="1.81" width="3" height=".8"/><rect x="8.5" y="6.26" width="3" height=".8"/><rect x="8.5" y="10.72" width="3" height=".8"/><rect x="8.5" y="15.17" width="3" height=".8"/><rect x="8.5" y="19.62" width="3" height=".8"/><rect x="-0.4" y="23.98" width="11.9" height="1"/><rect x="8.5" y="28.53" width="3" height=".8"/><rect x="8.5" y="32.98" width="3" height=".8"/><rect x="8.5" y="37.43" width="3" height=".8"/><rect x="8.5" y="41.89" width="3" height=".8"/><rect x="8.5" y="46.34" width="3" height=".8"/><rect x="8.5" y="50.79" width="3" height=".8"/><rect x="8.5" y="55.25" width="3" height=".8"/><rect x="-0.4" y="59.60" width="11.9" height="1"/><rect x="8.5" y="64.15" width="3" height=".8"/><rect x="8.5" y="68.61" width="3" height=".8"/><rect x="8.5" y="73.06" width="3" height=".8"/><rect x="8.5" y="77.51" width="3" height=".8"/><rect x="8.5" y="81.97" width="3" height=".8"/><rect x="8.5" y="86.42" width="3" height=".8"/><rect x="8.5" y="90.87" width="3" height=".8"/><rect x="-0.4" y="95.22" width="11.9" height="1"/><rect x="8.5" y="99.78" width="3" height=".8"/><rect x="8.5" y="104.23" width="3" height=".8"/><rect x="8.5" y="108.68" width="3" height=".8"/><rect x="8.5" y="113.14" width="3" height=".8"/><rect x="8.5" y="117.59" width="3" height=".8"/><rect x="8.5" y="122.04" width="3" height=".8"/><rect x="8.5" y="126.50" width="3" height=".8"/><rect x="-0.4" y="130.85" width="11.9" height="1"/><rect x="8.5" y="135.40" width="3" height=".8"/><rect x="8.5" y="139.86" width="3" height=".8"/><rect x="8.5" y="144.31" width="3" height=".8"/><rect x="8.5" y="148.76" width="3" height=".8"/><rect x="8.5" y="153.22" width="3" height=".8"/><rect x="8.5" y="157.67" width="3" height=".8"/><rect x="8.5" y="162.12" width="3" height=".8"/><rect x="-0.4" y="166.47" width="11.9" height="1"/><rect x="8.5" y="171.03" width="3" height=".8"/><rect x="8.5" y="175.48" width="3" height=".8"/><rect x="8.5" y="179.93" width="3" height=".8"/><rect x="8.5" y="184.39" width="3" height=".8"/><rect x="8.5" y="188.84" width="3" height=".8"/><rect x="8.5" y="193.29" width="3" height=".8"/><rect x="8.5" y="197.75" width="3" height=".8"/><rect x="-0.4" y="202.10" width="11.9" height="1"/><rect x="8.5" y="206.65" width="3" height=".8"/><rect x="8.5" y="211.11" width="3" height=".8"/><rect x="8.5" y="215.56" width="3" height=".8"/><rect x="8.5" y="220.01" width="3" height=".8"/><rect x="8.5" y="224.47" width="3" height=".8"/><rect x="8.5" y="228.92" width="3" height=".8"/><rect x="8.5" y="233.37" width="3" height=".8"/><rect x="-0.4" y="237.72" width="11.9" height="1"/><rect x="8.5" y="242.28" width="3" height=".8"/><rect x="8.5" y="246.73" width="3" height=".8"/><rect x="8.5" y="251.18" width="3" height=".8"/><rect x="8.5" y="255.64" width="3" height=".8"/><rect x="8.5" y="260.09" width="3" height=".8"/><rect x="8.5" y="264.54" width="3" height=".8"/><rect x="8.5" y="269.00" width="3" height=".8"/><rect x="-0.4" y="273.35" width="11.9" height="1"/><rect x="8.5" y="277.90" width="3" height=".8"/><rect x="8.5" y="282.36" width="3" height=".8"/><rect x="8.5" y="286.81" width="3" height=".8"/><rect x="8.5" y="291.26" width="3" height=".8"/><rect x="8.5" y="295.72" width="3" height=".8"/><rect x="8.5" y="300.17" width="3" height=".8"/><rect x="8.5" y="304.62" width="3" height=".8"/><rect x="-0.4" y="308.98" width="11.9" height="1"/><rect x="8.5" y="313.53" width="3" height=".8"/><rect x="8.5" y="317.98" width="3" height=".8"/><rect x="8.5" y="322.43" width="3" height=".8"/><rect x="8.5" y="326.89" width="3" height=".8"/><rect x="8.5" y="331.34" width="3" height=".8"/><rect x="8.5" y="335.79" width="3" height=".8"/><rect x="8.5" y="340.25" width="3" height=".8"/><rect x="-0.4" y="344.60" width="11.9" height="1"/><rect x="8.5" y="349.15" width="3" height=".8"/><rect x="8.5" y="353.61" width="3" height=".8"/><rect x="8.5" y="358.06" width="3" height=".8"/><rect x="8.5" y="362.51" width="3" height=".8"/><rect x="8.5" y="366.97" width="3" height=".8"/><rect x="8.5" y="371.42" width="3" height=".8"/><rect x="8.5" y="375.87" width="3" height=".8"/><rect x="-0.4" y="380.23" width="11.9" height="1"/><rect x="8.5" y="384.78" width="3" height=".8"/><rect x="8.5" y="389.23" width="3" height=".8"/><rect x="8.5" y="393.68" width="3" height=".8"/><rect x="8.5" y="398.14" width="3" height=".8"/><rect x="8.5" y="402.59" width="3" height=".8"/><rect x="8.5" y="407.04" width="3" height=".8"/><rect x="8.5" y="411.50" width="3" height=".8"/><rect x="-0.4" y="415.85" width="11.9" height="1"/><rect x="8.5" y="420.40" width="3" height=".8"/><rect x="8.5" y="424.86" width="3" height=".8"/><rect x="8.5" y="429.31" width="3" height=".8"/><rect x="8.5" y="433.76" width="3" height=".8"/><rect x="8.5" y="438.22" width="3" height=".8"/><rect x="8.5" y="442.67" width="3" height=".8"/><rect x="8.5" y="447.12" width="3" height=".8"/><rect x="-0.4" y="451.48" width="11.9" height="1"/><rect x="8.5" y="456.03" width="3" height=".8"/><rect x="8.5" y="460.48" width="3" height=".8"/><rect x="8.5" y="464.93" width="3" height=".8"/><rect x="8.5" y="469.39" width="3" height=".8"/><rect x="8.5" y="473.84" width="3" height=".8"/><rect x="8.5" y="478.29" width="3" height=".8"/><rect x="8.5" y="482.75" width="3" height=".8"/><rect x="-0.4" y="487.10" width="11.9" height="1"/><rect x="8.5" y="491.65" width="3" height=".8"/><rect x="8.5" y="496.11" width="3" height=".8"/><rect x="8.5" y="500.56" width="3" height=".8"/></g></svg><div class="t" style="left:0.9px;top:-8.35px;font-size:7.6px;line-height:6.35px;color:#b0b0b0;white-space:normal;width:6px;transform:scaleX(.85);transform-origin:0 0">2<br>0<br>0</div><div class="t" style="left:0.9px;top:27.27px;font-size:7.6px;line-height:6.35px;color:#b0b0b0;white-space:normal;width:6px;transform:scaleX(.85);transform-origin:0 0">1<br>0<br>0</div><div class="t" style="left:0.9px;top:62.90px;font-size:7.6px;line-height:6.35px;color:#b0b0b0;white-space:normal;width:6px;transform:scaleX(.85);transform-origin:0 0">0</div><div class="t" style="left:0.9px;top:98.53px;font-size:7.6px;line-height:6.35px;color:#b0b0b0;white-space:normal;width:6px;transform:scaleX(.85);transform-origin:0 0">1<br>0<br>0</div><div class="t" style="left:0.9px;top:134.15px;font-size:7.6px;line-height:6.35px;color:#b0b0b0;white-space:normal;width:6px;transform:scaleX(.85);transform-origin:0 0">2<br>0<br>0</div><div class="t" style="left:0.9px;top:169.78px;font-size:7.6px;line-height:6.35px;color:#b0b0b0;white-space:normal;width:6px;transform:scaleX(.85);transform-origin:0 0">3<br>0<br>0</div><div class="t" style="left:0.9px;top:205.40px;font-size:7.6px;line-height:6.35px;color:#b0b0b0;white-space:normal;width:6px;transform:scaleX(.85);transform-origin:0 0">4<br>0<br>0</div><div class="t" style="left:0.9px;top:241.03px;font-size:7.6px;line-height:6.35px;color:#b0b0b0;white-space:normal;width:6px;transform:scaleX(.85);transform-origin:0 0">5<br>0<br>0</div><div class="t" style="left:0.9px;top:276.65px;font-size:7.6px;line-height:6.35px;color:#b0b0b0;white-space:normal;width:6px;transform:scaleX(.85);transform-origin:0 0">6<br>0<br>0</div><div class="t" style="left:0.9px;top:312.27px;font-size:7.6px;line-height:6.35px;color:#b0b0b0;white-space:normal;width:6px;transform:scaleX(.85);transform-origin:0 0">7<br>0<br>0</div><div class="t" style="left:0.9px;top:347.90px;font-size:7.6px;line-height:6.35px;color:#b0b0b0;white-space:normal;width:6px;transform:scaleX(.85);transform-origin:0 0">8<br>0<br>0</div><div class="t" style="left:0.9px;top:383.52px;font-size:7.6px;line-height:6.35px;color:#b0b0b0;white-space:normal;width:6px;transform:scaleX(.85);transform-origin:0 0">9<br>0<br>0</div><div class="t" style="left:0.9px;top:419.15px;font-size:7.6px;line-height:6.35px;color:#b0b0b0;white-space:normal;width:6px;transform:scaleX(.85);transform-origin:0 0">1<br>0<br>0<br>0</div><div class="t" style="left:0.9px;top:454.77px;font-size:7.6px;line-height:6.35px;color:#b0b0b0;white-space:normal;width:6px;transform:scaleX(.85);transform-origin:0 0">1<br>1<br>0<br>0</div><div class="t" style="left:0.9px;top:490.40px;font-size:7.6px;line-height:6.35px;color:#b0b0b0;white-space:normal;width:6px;transform:scaleX(.85);transform-origin:0 0">1<br>2<br>0<br>0</div></div>
<div class="a" style="left:41px;top:90px;width:704px;height:503px;background:#282828"></div>
<div class="a" style="left:51px;top:150px;width:684px;height:383.5px;background:#5ec38a"></div>
<div class="a" style="left:745px;top:77px;width:13px;height:516px;background:#4a4a4a"></div>
<div class="a" style="left:29px;top:593px;width:729px;height:13px;background:#464646"></div>
<div class="a" style="left:29px;top:593px;width:42px;height:13px;background:#4a4a4a"></div>
<div class="a" style="left:71px;top:593px;width:131px;height:13px;background:#535353"></div>
<div class="t" id="t40" style="letter-spacing:-0.010px;left:41px;top:596.44px;font-size:7.44px;color:#d8d8d8;">100%</div>
<div class="t" id="t41" style="letter-spacing:0.148px;left:101px;top:596.44px;font-size:7.44px;color:#d8d8d8;">Doc: 5.93M/5.93M</div>
<svg style="left:195.5px;top:596px" width="4" height="7" viewBox="0 0 4 7"><path d="M.5.5L3.3 3.5.5 6.5" fill="none" stroke="#cfcfcf" stroke-width=".9"/></svg>
<svg style="left:0;top:0" width="1024" height="606"><defs>
<linearGradient id="silv" x1="0" x2="1" y1="0" y2="0">
<stop offset="0" stop-color="#737a80"/><stop offset=".12" stop-color="#a7aeb4"/><stop offset=".35" stop-color="#bcc2c7"/><stop offset=".65" stop-color="#b5bbc0"/><stop offset=".88" stop-color="#9ca3a9"/><stop offset="1" stop-color="#6a7177"/></linearGradient>
<linearGradient id="silvh" x1="0" x2="1"><stop offset="0" stop-color="#80878d"/><stop offset=".15" stop-color="#aeb5ba"/><stop offset=".5" stop-color="#bfc5c9"/><stop offset=".85" stop-color="#a9b0b5"/><stop offset="1" stop-color="#788086"/></linearGradient>
<linearGradient id="blue" x1="0" x2="1"><stop offset="0" stop-color="#3b8fc4"/><stop offset=".4" stop-color="#5fb3e2"/><stop offset="1" stop-color="#3d93c8"/></linearGradient>
<radialGradient id="redh" cx=".45" cy=".35" r=".7"><stop offset="0" stop-color="#ff6a5a"/><stop offset=".4" stop-color="#e52a1e"/><stop offset="1" stop-color="#b3140f"/></radialGradient>
<radialGradient id="scr" cx=".5" cy=".5" r=".7"><stop offset="0" stop-color="#b8281a"/><stop offset=".7" stop-color="#961a10"/><stop offset="1" stop-color="#6a0e08"/></radialGradient>
<linearGradient id="leg" x1="0" x2="1"><stop offset="0" stop-color="#8a8d90"/><stop offset=".5" stop-color="#c4c6c8"/><stop offset="1" stop-color="#8a8d90"/></linearGradient>
</defs><rect x="336.5" y="497" width="19.5" height="36.5" fill="url(#leg)"/><circle cx="346.25" cy="513" r="5.5" fill="#c9c4c8" stroke="#6a6a6a" stroke-width=".7"/><rect x="337.5" y="527.5" width="17.5" height="2" fill="#e8c21a"/><rect x="337.5" y="529.5" width="17.5" height="4" fill="#d8331c"/><rect x="416.5" y="497" width="25.5" height="36.5" fill="url(#leg)"/><circle cx="429.25" cy="513" r="5.5" fill="#c9c4c8" stroke="#6a6a6a" stroke-width=".7"/><rect x="417.5" y="527.5" width="23.5" height="2" fill="#e8c21a"/><rect x="417.5" y="529.5" width="23.5" height="4" fill="#d8331c"/><path d="M277.5 336c0-5 3-8 9-8.5l20-.5v111h-29z" fill="url(#blue)"/><path d="M278 388h28v3h-28z" fill="#c03a35" opacity=".8"/><path d="M279 396h26M279 400h26M279 404h26" stroke="#a7d6ee" stroke-width=".8"/><path d="M278 436.5l29-2.5v2.5z" fill="#e9d028"/><path d="M278 438c9-2.5 20-3.5 29.5-3.5v55c-5 .3-14 0-22-1-3-.5-6.5-3-7-6z" fill="url(#redh)"/><ellipse cx="288" cy="453" rx="4" ry="3" fill="#ff8d80" opacity=".8"/><path d="M470 318.5c8-1 18 .5 24 3 4 2 5.5 5 5.5 10V432h-29z" fill="url(#blue)"/><path d="M474 392h22M474 396h22M474 400h22" stroke="#8ccbea" stroke-width=".9"/><path d="M470 430h21.5v2.5H470z" fill="#e9d028"/><path d="M470 432.5h21.5v33c0 3-2 5-5 5.5l-12 .5c-2-1-3.5-3-4.5-6z" fill="url(#redh)"/><path d="M469 433c2 10 2 25 5 37" stroke="#e8e8e8" stroke-width="2.5" fill="none"/><rect x="469" y="422.2" width="43" height="7.5" fill="#b9bab0" stroke="#7a7a70" stroke-width=".6"/><path d="M521 412c-2-8 3-14.5 11-14.5 8 0 13 6 13 13 0 5-3 8-6 10v13c4 2 7.5 6 7.5 11 0 8-6 14-14 14s-14-6-14-13.5c0-5 2.5-8.5 6-10.5v-12.5c-2-1.5-3-3.5-3.5-5z" fill="#a29a6c" stroke="#5f5a3c" stroke-width=".8"/><rect x="511" y="416.5" width="14" height="15" fill="#d6d4bf" stroke="#6f6e60" stroke-width=".7"/><rect x="528" y="416.5" width="13" height="15" fill="#cdcab0" stroke="#6f6e60" stroke-width=".7"/><path d="M525 420h3v7h-3z" fill="#8a8870"/><path d="M330 300c-3 8-10 13-17 17-5 3-8.5 7-8.5 12V430c1 20 5 40 13 61h143c7-20 12-45 12.5-62V327c0-5-3-9-8-11.5-7-4-13-9-16-15.5z" fill="url(#silv)" stroke="#5a5e62" stroke-width=".8"/><path d="M317 490.5h145c1 0 2 1 2 2.5v4c0 1.5-1 2.5-2.5 2.5H317.5c-1.5 0-2.5-1-2.5-2.5v-4c0-1.5 1-2.5 2-2.5z" fill="#c3c5c7" stroke="#6f7276" stroke-width=".7"/><path d="M343.5 313h90c2 8 3 18 3 30h-99c0-12 2-22 6-30z" fill="#2a2b2d"/><path d="M340 318.5h96" stroke="#c8cacc" stroke-width="1.1"/><path d="M340 324.5h96" stroke="#c8cacc" stroke-width="1.1"/><path d="M340 330.5h96" stroke="#c8cacc" stroke-width="1.1"/><path d="M340 336.5h96" stroke="#c8cacc" stroke-width="1.1"/><path d="M372 313v30M403 313v30" stroke="#c8cacc" stroke-width="1"/><path d="M337.5 343h99" stroke="#8d9094" stroke-width="2"/><ellipse cx="315.8" cy="349" rx="11" ry="16" fill="#d9dbdd" stroke="#595c60" stroke-width=".9"/><ellipse cx="315.8" cy="349" rx="8.5" ry="13" fill="#2c2d2f"/><path d="M309.20 341.12V356.88" stroke="#d5d7d9" stroke-width=".9"/><path d="M311.40 338.31V359.69" stroke="#d5d7d9" stroke-width=".9"/><path d="M313.60 336.93V361.07" stroke="#d5d7d9" stroke-width=".9"/><path d="M315.80 336.50V361.50" stroke="#d5d7d9" stroke-width=".9"/><path d="M318.00 336.93V361.07" stroke="#d5d7d9" stroke-width=".9"/><path d="M320.20 338.31V359.69" stroke="#d5d7d9" stroke-width=".9"/><path d="M322.40 341.12V356.88" stroke="#d5d7d9" stroke-width=".9"/><ellipse cx="460.6" cy="349" rx="11" ry="16" fill="#d9dbdd" stroke="#595c60" stroke-width=".9"/><ellipse cx="460.6" cy="349" rx="8.5" ry="13" fill="#2c2d2f"/><path d="M454.00 341.12V356.88" stroke="#d5d7d9" stroke-width=".9"/><path d="M456.20 338.31V359.69" stroke="#d5d7d9" stroke-width=".9"/><path d="M458.40 336.93V361.07" stroke="#d5d7d9" stroke-width=".9"/><path d="M460.60 336.50V361.50" stroke="#d5d7d9" stroke-width=".9"/><path d="M462.80 336.93V361.07" stroke="#d5d7d9" stroke-width=".9"/><path d="M465.00 338.31V359.69" stroke="#d5d7d9" stroke-width=".9"/><path d="M467.20 341.12V356.88" stroke="#d5d7d9" stroke-width=".9"/><path d="M335 351h104v76c0 4-3 7-7 7h-96c-3 0-5-2-5-5z" fill="none" stroke="#6d7074" stroke-width=".8"/><rect x="340.5" y="349.5" width="93" height="79" rx="4" fill="#d4d6d8" stroke="#65686c" stroke-width=".8"/><rect x="346.5" y="353.5" width="82" height="71" rx="3" fill="#2a2020"/><rect x="352.2" y="361.3" width="71" height="58" fill="url(#scr)"/><rect x="378" y="349.5" width="16" height="5" fill="#d4d6d8"/><g fill="none" stroke="#ff4a2a" stroke-width="1.8"><path d="M388 373L405 390L388 407L371 390z"/><path d="M388 379L399 390L388 401L377 390z" stroke-width="1"/><path d="M382 387h12M381 390h14M382 393h12" stroke-width=".9"/></g><circle cx="333.4" cy="386" r="4.8" fill="#e7e8ea" stroke="#6d7074" stroke-width=".7"/><circle cx="333.4" cy="386" r="3.2" fill="#d8261a"/><circle cx="332.5" cy="384.9" r="1" fill="#ff9d8a"/><circle cx="333.4" cy="407.5" r="4.8" fill="#e7e8ea" stroke="#6d7074" stroke-width=".7"/><circle cx="333.4" cy="407.5" r="3.2" fill="#d8261a"/><circle cx="332.5" cy="406.4" r="1" fill="#ff9d8a"/><circle cx="333.4" cy="429" r="4.8" fill="#e7e8ea" stroke="#6d7074" stroke-width=".7"/><circle cx="333.4" cy="429" r="3.2" fill="#d8261a"/><circle cx="332.5" cy="427.9" r="1" fill="#ff9d8a"/><circle cx="442.2" cy="386" r="4.8" fill="#e7e8ea" stroke="#6d7074" stroke-width=".7"/><circle cx="442.2" cy="386" r="3.2" fill="#d8261a"/><circle cx="441.3" cy="384.9" r="1" fill="#ff9d8a"/><circle cx="442.2" cy="407.5" r="4.8" fill="#e7e8ea" stroke="#6d7074" stroke-width=".7"/><circle cx="442.2" cy="407.5" r="3.2" fill="#d8261a"/><circle cx="441.3" cy="406.4" r="1" fill="#ff9d8a"/><circle cx="442.2" cy="429" r="4.8" fill="#e7e8ea" stroke="#6d7074" stroke-width=".7"/><circle cx="442.2" cy="429" r="3.2" fill="#d8261a"/><circle cx="441.3" cy="427.9" r="1" fill="#ff9d8a"/><path d="M307 384c1-5 3-8 6-8h8c3 0 5 3 6 8z" fill="#b9bcbf" stroke="#3a3c3e" stroke-width=".8"/><path d="M307.5 384.3c2-2.5 4-3.5 7-3.5h6c3 0 5 1 7 3.5" fill="none" stroke="#1f2022" stroke-width="2"/><path d="M307 406c1-5 3-8 6-8h8c3 0 5 3 6 8z" fill="#b9bcbf" stroke="#3a3c3e" stroke-width=".8"/><path d="M307.5 406.3c2-2.5 4-3.5 7-3.5h6c3 0 5 1 7 3.5" fill="none" stroke="#1f2022" stroke-width="2"/><path d="M307 428c1-5 3-8 6-8h8c3 0 5 3 6 8z" fill="#b9bcbf" stroke="#3a3c3e" stroke-width=".8"/><path d="M307.5 428.3c2-2.5 4-3.5 7-3.5h6c3 0 5 1 7 3.5" fill="none" stroke="#1f2022" stroke-width="2"/><path d="M307 450c1-5 3-8 6-8h8c3 0 5 3 6 8z" fill="#b9bcbf" stroke="#3a3c3e" stroke-width=".8"/><path d="M307.5 450.3c2-2.5 4-3.5 7-3.5h6c3 0 5 1 7 3.5" fill="none" stroke="#1f2022" stroke-width="2"/><path d="M452 384c1-5 3-8 6-8h8c3 0 5 3 6 8z" fill="#b9bcbf" stroke="#3a3c3e" stroke-width=".8"/><path d="M452.5 384.3c2-2.5 4-3.5 7-3.5h6c3 0 5 1 7 3.5" fill="none" stroke="#1f2022" stroke-width="2"/><path d="M452 406c1-5 3-8 6-8h8c3 0 5 3 6 8z" fill="#b9bcbf" stroke="#3a3c3e" stroke-width=".8"/><path d="M452.5 406.3c2-2.5 4-3.5 7-3.5h6c3 0 5 1 7 3.5" fill="none" stroke="#1f2022" stroke-width="2"/><path d="M452 428c1-5 3-8 6-8h8c3 0 5 3 6 8z" fill="#b9bcbf" stroke="#3a3c3e" stroke-width=".8"/><path d="M452.5 428.3c2-2.5 4-3.5 7-3.5h6c3 0 5 1 7 3.5" fill="none" stroke="#1f2022" stroke-width="2"/><path d="M452 450c1-5 3-8 6-8h8c3 0 5 3 6 8z" fill="#b9bcbf" stroke="#3a3c3e" stroke-width=".8"/><path d="M452.5 450.3c2-2.5 4-3.5 7-3.5h6c3 0 5 1 7 3.5" fill="none" stroke="#1f2022" stroke-width="2"/><rect x="372" y="433.6" width="34.5" height="14" fill="#3a3d8e"/><ellipse cx="375.5" cy="440.6" rx="2.8" ry="5" fill="none" stroke="#e8d020" stroke-width="1.1"/><ellipse cx="375.5" cy="440.6" rx="1.3" ry="2.6" fill="#d8331c"/><ellipse cx="382.0" cy="440.6" rx="2.8" ry="5" fill="none" stroke="#e8d020" stroke-width="1.1"/><ellipse cx="382.0" cy="440.6" rx="1.3" ry="2.6" fill="#d8331c"/><ellipse cx="388.5" cy="440.6" rx="2.8" ry="5" fill="none" stroke="#e8d020" stroke-width="1.1"/><ellipse cx="388.5" cy="440.6" rx="1.3" ry="2.6" fill="#d8331c"/><ellipse cx="395.0" cy="440.6" rx="2.8" ry="5" fill="none" stroke="#e8d020" stroke-width="1.1"/><ellipse cx="395.0" cy="440.6" rx="1.3" ry="2.6" fill="#d8331c"/><ellipse cx="401.5" cy="440.6" rx="2.8" ry="5" fill="none" stroke="#e8d020" stroke-width="1.1"/><ellipse cx="401.5" cy="440.6" rx="1.3" ry="2.6" fill="#d8331c"/><rect x="364.4" y="451.4" width="49" height="7" rx="3.5" fill="#e8a21c" stroke="#7a5a20" stroke-width=".6"/><rect x="366" y="453.8" width="46" height="2.2" fill="#d8331c"/><circle cx="343" cy="449.5" r="11.8" fill="#dfe1e3" stroke="#55585c" stroke-width=".9"/><circle cx="343" cy="449.5" r="9" fill="#cfd1d3" stroke="#8a8d90" stroke-width=".6"/><circle cx="349.00" cy="449.50" r="1.5" fill="#2f3033"/><circle cx="347.24" cy="453.74" r="1.5" fill="#2f3033"/><circle cx="343.00" cy="455.50" r="1.5" fill="#2f3033"/><circle cx="338.76" cy="453.74" r="1.5" fill="#2f3033"/><circle cx="337.00" cy="449.50" r="1.5" fill="#2f3033"/><circle cx="338.76" cy="445.26" r="1.5" fill="#2f3033"/><circle cx="343.00" cy="443.50" r="1.5" fill="#2f3033"/><circle cx="347.24" cy="445.26" r="1.5" fill="#2f3033"/><circle cx="343" cy="449.5" r="3.6" fill="#2f3033"/><circle cx="435" cy="449.5" r="11.8" fill="#dfe1e3" stroke="#55585c" stroke-width=".9"/><circle cx="435" cy="449.5" r="9" fill="#cfd1d3" stroke="#8a8d90" stroke-width=".6"/><circle cx="441.00" cy="449.50" r="1.5" fill="#2f3033"/><circle cx="439.24" cy="453.74" r="1.5" fill="#2f3033"/><circle cx="435.00" cy="455.50" r="1.5" fill="#2f3033"/><circle cx="430.76" cy="453.74" r="1.5" fill="#2f3033"/><circle cx="429.00" cy="449.50" r="1.5" fill="#2f3033"/><circle cx="430.76" cy="445.26" r="1.5" fill="#2f3033"/><circle cx="435.00" cy="443.50" r="1.5" fill="#2f3033"/><circle cx="439.24" cy="445.26" r="1.5" fill="#2f3033"/><circle cx="435" cy="449.5" r="3.6" fill="#2f3033"/><rect x="330" y="468.5" width="118" height="16.5" rx="3" fill="#c9cbcd" stroke="#3f4245" stroke-width=".9"/><path d="M331 463h116" stroke="#5d6064" stroke-width=".7"/><path d="M328.5 300V238c0-6 1.5-10 5-14 3-4 8-7 14-7.5 15-1 66-1 81 0 6 .5 11 3.5 14 7.5 3.5 4 5 8 5 14v62c-4 6-10 9-14 11H342c-5-2-10-5-13.5-11z" fill="url(#silvh)"/><path d="M329.2 300V238c0-6 1.5-10 5-14 3-4 8-7 14-7.5 15-1 66-1 81 0 6 .5 11 3.5 14 7.5 3.5 4 5 8 5 14v62" fill="none" stroke="#d9dbdc" stroke-width="1.6"/><path d="M331.5 300V239c0-5 1.5-9 4.5-12.5 3-3.5 7-6 12.5-6.5 15-1 65-1 80 0 5.5.5 9.5 3 12.5 6.5 3 3.5 4.5 7.5 4.5 12.5v61" fill="none" stroke="#3c3a34" stroke-width="1"/><path d="M348 226h80" stroke="#dfe1e3" stroke-width="5" opacity=".35"/><path d="M329 236v64h4.5v-62c0-3 .5-5 1.5-7z" fill="#8a7c50" opacity=".85"/><path d="M447 236v64h-4.5v-62c0-3-.5-5-1.5-7z" fill="#8a7c50" opacity=".85"/><rect x="318.5" y="245" width="10.5" height="35" rx="5" fill="url(#redh)"/><rect x="447.2" y="245" width="10.5" height="35" rx="5" fill="url(#redh)"/><circle cx="334.5" cy="250" r="1.8" fill="#f0b822"/><circle cx="334.5" cy="250" r=".8" fill="#e0401a"/><circle cx="334.5" cy="257" r="1.8" fill="#f0b822"/><circle cx="334.5" cy="257" r=".8" fill="#e0401a"/><circle cx="334.5" cy="264" r="1.8" fill="#f0b822"/><circle cx="334.5" cy="264" r=".8" fill="#e0401a"/><circle cx="334.5" cy="271" r="1.8" fill="#f0b822"/><circle cx="334.5" cy="271" r=".8" fill="#e0401a"/><circle cx="334.5" cy="278" r="1.8" fill="#f0b822"/><circle cx="334.5" cy="278" r=".8" fill="#e0401a"/><circle cx="334.5" cy="285" r="1.8" fill="#f0b822"/><circle cx="334.5" cy="285" r=".8" fill="#e0401a"/><circle cx="334.5" cy="292" r="1.8" fill="#f0b822"/><circle cx="334.5" cy="292" r=".8" fill="#e0401a"/><circle cx="441.5" cy="250" r="1.8" fill="#f0b822"/><circle cx="441.5" cy="250" r=".8" fill="#e0401a"/><circle cx="441.5" cy="257" r="1.8" fill="#f0b822"/><circle cx="441.5" cy="257" r=".8" fill="#e0401a"/><circle cx="441.5" cy="264" r="1.8" fill="#f0b822"/><circle cx="441.5" cy="264" r=".8" fill="#e0401a"/><circle cx="441.5" cy="271" r="1.8" fill="#f0b822"/><circle cx="441.5" cy="271" r=".8" fill="#e0401a"/><circle cx="441.5" cy="278" r="1.8" fill="#f0b822"/><circle cx="441.5" cy="278" r=".8" fill="#e0401a"/><circle cx="441.5" cy="285" r="1.8" fill="#f0b822"/><circle cx="441.5" cy="285" r=".8" fill="#e0401a"/><circle cx="441.5" cy="292" r="1.8" fill="#f0b822"/><circle cx="441.5" cy="292" r=".8" fill="#e0401a"/><circle cx="351.8" cy="262.2" r="12.4" fill="#e9ebec" stroke="#2a2c2e" stroke-width="1.4"/><circle cx="351.8" cy="262.2" r="10.5" fill="#f2c21c"/><circle cx="359.40" cy="262.20" r="2.2" fill="#f5d84a"/><circle cx="357.95" cy="266.67" r="2.2" fill="#f5d84a"/><circle cx="354.15" cy="269.43" r="2.2" fill="#f5d84a"/><circle cx="349.45" cy="269.43" r="2.2" fill="#f5d84a"/><circle cx="345.65" cy="266.67" r="2.2" fill="#f5d84a"/><circle cx="344.20" cy="262.20" r="2.2" fill="#f5d84a"/><circle cx="345.65" cy="257.73" r="2.2" fill="#f5d84a"/><circle cx="349.45" cy="254.97" r="2.2" fill="#f5d84a"/><circle cx="354.15" cy="254.97" r="2.2" fill="#f5d84a"/><circle cx="357.95" cy="257.73" r="2.2" fill="#f5d84a"/><circle cx="351.8" cy="262.2" r="6.8" fill="#ec4a1c"/><circle cx="351.8" cy="262.2" r="4.6" fill="#e8261a"/><circle cx="423.6" cy="261.3" r="12.4" fill="#e9ebec" stroke="#2a2c2e" stroke-width="1.4"/><circle cx="423.6" cy="261.3" r="10.5" fill="#f2c21c"/><circle cx="431.20" cy="261.30" r="2.2" fill="#f5d84a"/><circle cx="429.75" cy="265.77" r="2.2" fill="#f5d84a"/><circle cx="425.95" cy="268.53" r="2.2" fill="#f5d84a"/><circle cx="421.25" cy="268.53" r="2.2" fill="#f5d84a"/><circle cx="417.45" cy="265.77" r="2.2" fill="#f5d84a"/><circle cx="416.00" cy="261.30" r="2.2" fill="#f5d84a"/><circle cx="417.45" cy="256.83" r="2.2" fill="#f5d84a"/><circle cx="421.25" cy="254.07" r="2.2" fill="#f5d84a"/><circle cx="425.95" cy="254.07" r="2.2" fill="#f5d84a"/><circle cx="429.75" cy="256.83" r="2.2" fill="#f5d84a"/><circle cx="423.6" cy="261.3" r="6.8" fill="#ec4a1c"/><circle cx="423.6" cy="261.3" r="4.6" fill="#e8261a"/><path d="M387.1 258.5L403.2 287H370z" fill="#a9acaf" stroke="#1e1f20" stroke-width="1.8" stroke-linejoin="round"/><path d="M387.1 261.5L387.1 285.5H372.5z" fill="#e6e8e9"/><rect x="343.6" y="287" width="87.5" height="17.6" fill="#e0e2e4" stroke="#2a2b2d" stroke-width="1"/><rect x="347.5" y="289.6" width="79.7" height="11.8" fill="#2a2b2d"/><rect x="348.30" y="290.6" width="4.09" height="9.8" fill="#d8dadc"/><rect x="353.99" y="290.6" width="4.09" height="9.8" fill="#d8dadc"/><rect x="359.69" y="290.6" width="4.09" height="9.8" fill="#d8dadc"/><rect x="365.38" y="290.6" width="4.09" height="9.8" fill="#d8dadc"/><rect x="371.07" y="290.6" width="4.09" height="9.8" fill="#d8dadc"/><rect x="376.76" y="290.6" width="4.09" height="9.8" fill="#d8dadc"/><rect x="382.46" y="290.6" width="4.09" height="9.8" fill="#d8dadc"/><rect x="388.15" y="290.6" width="4.09" height="9.8" fill="#d8dadc"/><rect x="393.84" y="290.6" width="4.09" height="9.8" fill="#d8dadc"/><rect x="399.54" y="290.6" width="4.09" height="9.8" fill="#d8dadc"/><rect x="405.23" y="290.6" width="4.09" height="9.8" fill="#d8dadc"/><rect x="410.92" y="290.6" width="4.09" height="9.8" fill="#d8dadc"/><rect x="416.61" y="290.6" width="4.09" height="9.8" fill="#d8dadc"/><rect x="422.31" y="290.6" width="4.09" height="9.8" fill="#d8dadc"/></svg>
<div class="a" style="left:530px;top:63px;width:228px;height:106px;background:#3a3a3a"></div>
<div class="a" style="left:531px;top:65.5px;width:227px;height:20.5px;background:#434343"></div>
<div class="a" style="left:572px;top:65.5px;width:40px;height:20.5px;background:#535353"></div>
<div class="t" id="t42" style="letter-spacing:-0.094px;left:537.5px;top:73.07px;font-size:8.00px;color:#b8b8b8;font-weight:bold;">History</div>
<div class="t" id="t43" style="letter-spacing:-0.307px;left:578px;top:73.07px;font-size:8.00px;color:#ececec;font-weight:bold;">Actions</div>
<svg style="left:728.5px;top:73px" width="30" height="8" viewBox="0 0 30 8"><g fill="none" stroke="#bdbdbd" stroke-width=".9"><path d="M.5 .8L3 3.3.5 5.8M3.8.8L6.3 3.3 3.8 5.8"/></g><rect x="12" y="-1" width=".9" height="8.5" fill="#6a6a6a"/><rect x="17.5" y="0" width="7.7" height="5.9" fill="#8a8a8a"/><g fill="#5e5e5e"><rect x="17.5" y="1.4" width="7.7" height=".5"/><rect x="17.5" y="2.9" width="7.7" height=".5"/><rect x="17.5" y="4.4" width="7.7" height=".5"/></g></svg>
<div class="a" style="left:531px;top:86px;width:227px;height:77px;background:#535353"></div>
<div class="a" style="left:531px;top:86px;width:227px;height:3px;background:#4d4d4d"></div>
<div class="a" style="left:546px;top:89px;width:1px;height:58.5px;background:#4a4a4a"></div>
<div class="a" style="left:746px;top:89px;width:12px;height:58.5px;background:#4f4f4f"></div>
<div class="a" style="left:748.4px;top:131px;width:7px;height:14.2px;background:#6b6b6b;border-radius:3.5px"></div>
<div class="a" style="left:562.5px;top:89px;width:183.5px;height:1px;background:#4b4b4b"></div>
<div class="a" style="left:562.5px;top:104px;width:183.5px;height:1px;background:#4b4b4b"></div>
<div class="a" style="left:562.5px;top:118px;width:183.5px;height:1px;background:#4b4b4b"></div>
<div class="a" style="left:562.5px;top:132.5px;width:183.5px;height:1px;background:#4b4b4b"></div>
<div class="a" style="left:585.4px;top:133.4px;width:160.6px;height:12.4px;background:#646464"></div>
<div class="a" style="left:531px;top:146.5px;width:215px;height:1px;background:#4b4b4b"></div>
<svg style="left:0;top:0" width="1024" height="200"><g fill="none" stroke="#e6e6e6" stroke-width="1.2"><path d="M536.3 96.5l2.2 2.3 4-4.6"/><path d="M536.3 110.9l2.2 2.3 4-4.6"/><path d="M536.3 125.0l2.2 2.3 4-4.6"/><path d="M536.3 139.3l2.2 2.3 4-4.6"/></g><g fill="none" stroke="#c8c8c8" stroke-width=".9"><rect x="550.2" y="92.5" width="8.3" height="8.2" stroke="#4a4a4a"/><rect x="550.2" y="106.9" width="8.3" height="8.2"/><path d="M550.2 108.6h8.3M552.5 112.4h3.7"/><rect x="550.2" y="121.0" width="8.3" height="8.2"/><path d="M550.2 122.7h8.3M552.5 126.5h3.7"/><rect x="550.2" y="135.3" width="8.3" height="8.2"/><path d="M550.2 137.0h8.3M552.5 140.8h3.7"/><path d="M566 93.5l2.8 3-2.8 3"/><path d="M566 107.9l2.8 3-2.8 3"/><path d="M565.5 123.5l3 3 3-3"/><path d="M579 136.3l2.8 3-2.8 3"/></g><g fill="#e0e0e0"><path d="M576.8 92.7h3.2l.8 1h5.8v7.4h-9.8z"/><path d="M576.8 107.1h3.2l.8 1h5.8v7.4h-9.8z"/><path d="M576.8 121.2h3.2l.8 1h5.8v1.4h-8.6v1h8.6v5h-9.8z"/></g></svg>
<div class="t" id="t44" style="letter-spacing:-0.154px;left:592.8px;top:93.46px;font-size:7.81px;color:#e6e6e6;">Duotoner</div>
<div class="t" id="t45" style="letter-spacing:-0.016px;left:592.5px;top:107.76px;font-size:7.81px;color:#e6e6e6;">Flywheel - Double Xpos</div>
<div class="t" id="t46" style="letter-spacing:0.083px;left:592.5px;top:121.96px;font-size:7.81px;color:#e6e6e6;">Flywheel - Glitch-a-tron</div>
<div class="t" id="t47" style="letter-spacing:0.034px;left:588px;top:136.26px;font-size:7.81px;color:#e6e6e6;">Glitch-a-tron - Select and hit play copy</div>
<svg style="left:0;top:0" width="1024" height="200"><g fill="#dcdcdc"><rect x="624.7" y="152.8" width="5.3" height="5.3" fill="#8c8c8c"/><circle cx="647.9" cy="155.5" r="3.3"/><path d="M665.8 151.6v7.8l7-3.9z"/><path d="M685 151.5h3l.8.9h5.2v6.8h-9z"/></g><g fill="none" stroke="#dcdcdc" stroke-width=".9"><path d="M710.3 151.5h5.6v7.7h-7.7v-5.6z"/><path d="M708.2 153.6h2.1v-2.1M712 155.5v1.9h-1.9"/><path d="M729.5 153h7M731 153v6h4.5v-6M731.8 153v-1.5h2.9v1.5M732.6 154.5v3.5M734 154.5v3.5"/></g></svg>
<div class="a" style="left:531px;top:163px;width:227px;height:6px;background:#484848;border-top:1px solid #3c3c3c"></div>
<div class="a" style="left:758px;top:56px;width:266px;height:9px;background:#424242"></div>
<svg style="left:776px;top:59.5px" width="6" height="4" viewBox="0 0 6 4"><path d="M2.5.5L1 2l1.5 1.5M5.5.5L4 2l1.5 1.5" fill="none" stroke="#9a9a9a" stroke-width=".8"/></svg>
<svg style="left:1015px;top:59.5px" width="6" height="4" viewBox="0 0 6 4"><path d="M.5.5L2 2 .5 3.5M3.5.5L5 2 3.5 3.5" fill="none" stroke="#9a9a9a" stroke-width=".8"/></svg>
<div class="a" style="left:758px;top:65px;width:1px;height:541px;background:#3a3a3a"></div>
<div class="a" style="left:786px;top:56px;width:2px;height:550px;background:#3f3f3f"></div>
<div class="a" style="left:759px;top:65px;width:27px;height:541px;background:#535353"></div>
<div class="a" style="left:759px;top:114px;width:27px;height:1.5px;background:#444"></div>
<div class="a" style="left:759px;top:143px;width:27px;height:1.5px;background:#444"></div>
<div class="a" style="left:759px;top:172px;width:27px;height:1.5px;background:#444"></div>
<div class="a" style="left:759px;top:221px;width:27px;height:1.5px;background:#444"></div>
<div class="a" style="left:759px;top:250.5px;width:27px;height:1.5px;background:#444"></div>
<div class="a" style="left:766px;top:69px;width:13px;height:1.2px;background:repeating-linear-gradient(90deg,#6a6a6a 0 1px,transparent 1px 2px)"></div>
<div class="a" style="left:766px;top:118px;width:13px;height:1.2px;background:repeating-linear-gradient(90deg,#6a6a6a 0 1px,transparent 1px 2px)"></div>
<div class="a" style="left:766px;top:147px;width:13px;height:1.2px;background:repeating-linear-gradient(90deg,#6a6a6a 0 1px,transparent 1px 2px)"></div>
<div class="a" style="left:766px;top:176.5px;width:13px;height:1.2px;background:repeating-linear-gradient(90deg,#6a6a6a 0 1px,transparent 1px 2px)"></div>
<div class="a" style="left:766px;top:225.5px;width:13px;height:1.2px;background:repeating-linear-gradient(90deg,#6a6a6a 0 1px,transparent 1px 2px)"></div>
<div class="a" style="left:763px;top:94.3px;width:19px;height:14.5px;background:#3a3a3a"></div>
<svg style="left:0;top:0" width="1024" height="606"><g fill="#e2e2e2"><rect x="768" y="75.8" width="3.6" height="3.4" fill="none" stroke="#d8d8d8" stroke-width=".8"/><rect x="768" y="80.5" width="3.6" height="3.4" fill="none" stroke="#d8d8d8" stroke-width=".8"/><rect x="768" y="85" width="3.6" height="3.4"/><path d="M774.5 87.5c3.5-2 4.5-7 1.2-9.6" fill="none" stroke="#e2e2e2" stroke-width="1.3"/><path d="M773 76.2l4 .3-1.6 3.4z"/><path d="M768.3 96.5v10.2l9.4-5.1z"/><path d="M771.5 124.5l3.2 1.7v3.8l-3.2 1.7-3.2-1.7v-3.8z" fill="none" stroke="#d8d8d8" stroke-width=".8"/><rect x="776.5" y="124" width="2.6" height="2.6"/><rect x="776.5" y="128" width="2.6" height="2.6"/><rect x="768" y="133.5" width="11.5" height="1.6"/><rect x="765" y="155.5" width="1.2" height="1.2"/><rect x="765" y="158" width="1.2" height="1.2"/><rect x="765" y="160.5" width="1.2" height="1.2"/><rect x="767" y="155.7" width="3" height=".9"/><rect x="767" y="158.2" width="2.5" height=".9"/><rect x="767" y="160.7" width="2" height=".9"/><circle cx="774.5" cy="156.8" r="2.2"/><path d="M773.7 158.5h1.6l.3 2.3h3.5v2.4h-9.2v-2.4h3.5z"/><rect x="769.8" y="164.3" width="9.4" height="1.2"/></g></svg>
<svg style="left:767.5px;top:184px" width="12" height="12" viewBox="0 0 12 12"><path d="M.6 11L4.6.8h1L9.6 11M2.2 7.3h5.8" fill="none" stroke="#e2e2e2" stroke-width="1.1"/><path d="M10.8 0v11.5" stroke="#e2e2e2" stroke-width=".9"/></svg>
<svg style="left:769px;top:204px" width="9" height="12" viewBox="0 0 9 12"><path d="M4.2 0H8.6v12H7.4V1.1H6.2V12H5V6.6H4.2a3.3 3.3 0 0 1 0-6.6z" fill="#e2e2e2"/></svg>
<svg style="left:767px;top:232px" width="13" height="13" viewBox="0 0 13 13"><g fill="none" stroke="#d8d8d8" stroke-width=".9"><path d="M6.5.8l5.4 2.8v6L6.5 12.4 1.1 9.6v-6z"/><path d="M1.1 3.6l5.4 2.8 5.4-2.8M6.5 6.4v6"/></g><path d="M6.5 6.4l5.4-2.8v6L6.5 12.4z" fill="#9a9a9a"/></svg>
<div class="a" style="left:788px;top:65px;width:236px;height:541px;background:#3f3f3f"></div>
<div class="a" style="left:788px;top:66px;width:236px;height:141px;background:#535353"></div>
<div class="a" style="left:788px;top:66px;width:236px;height:18.8px;background:#434343"></div>
<div class="a" style="left:788px;top:66px;width:33px;height:18.8px;background:#474747"></div>
<div class="a" style="left:821px;top:66px;width:47px;height:18.8px;background:#535353"></div>
<div class="t" id="t48" style="transform:scaleX(0.9183);transform-origin:0 0;left:794px;top:73.28px;font-size:8.18px;color:#b4b4b4;font-weight:bold;">Color</div>
<div class="t" id="t49" style="transform:scaleX(0.9150);transform-origin:0 0;left:827.3px;top:73.28px;font-size:8.18px;color:#ececec;font-weight:bold;">Swatches</div>
<div class="a" style="left:1013.3px;top:72.4px;width:7.5px;height:5.5px;background:#8c8c8c"></div><div class="a" style="left:1013.3px;top:73.7px;width:7.5px;height:.5px;background:#5c5c5c"></div><div class="a" style="left:1013.3px;top:75.0px;width:7.5px;height:.5px;background:#5c5c5c"></div><div class="a" style="left:1013.3px;top:76.30000000000001px;width:7.5px;height:.5px;background:#5c5c5c"></div>
<div class="a" style="left:791px;top:91.3px;width:183.5px;height:13.2px;background:#333"></div>
<svg style="left:0;top:0" width="1024" height="606"><rect x="792.00" y="92.3" width="10.6" height="11.2" fill="#000000"/><rect x="803.40" y="92.3" width="10.6" height="11.2" fill="#ffffff"/><rect x="814.80" y="92.3" width="10.6" height="11.2" fill="#000000"/><rect x="826.20" y="92.3" width="10.6" height="11.2" fill="#5ec38a"/><rect x="837.60" y="92.3" width="10.6" height="11.2" fill="#808080"/><rect x="849.00" y="92.3" width="10.6" height="11.2" fill="#000000"/><rect x="860.40" y="92.3" width="10.6" height="11.2" fill="#ffffff"/><rect x="871.80" y="92.3" width="10.6" height="11.2" fill="#f3cfe0"/><rect x="883.20" y="92.3" width="10.6" height="11.2" fill="#f3d3d6"/><rect x="894.60" y="92.3" width="10.6" height="11.2" fill="#f6dccd"/><rect x="906.00" y="92.3" width="10.6" height="11.2" fill="#f6efcf"/><rect x="917.40" y="92.3" width="10.6" height="11.2" fill="#e0e5dc"/><rect x="928.80" y="92.3" width="10.6" height="11.2" fill="#e4e7ec"/><rect x="940.20" y="92.3" width="10.6" height="11.2" fill="#d8d5e3"/><rect x="951.60" y="92.3" width="10.6" height="11.2" fill="#f2d0e1"/><rect x="963.00" y="92.3" width="10.6" height="11.2" fill="#f3d5d4"/><rect x="787" y="106.5" width="227" height="83" fill="#474747"/><rect x="787.50" y="107.20" width="12.1" height="12.10" fill="#ff1a1a"/><rect x="800.31" y="107.20" width="12.1" height="12.10" fill="#ffed1a"/><rect x="813.12" y="107.20" width="12.1" height="12.10" fill="#1aff1a"/><rect x="825.93" y="107.20" width="12.1" height="12.10" fill="#1affff"/><rect x="838.74" y="107.20" width="12.1" height="12.10" fill="#1a1aff"/><rect x="851.55" y="107.20" width="12.1" height="12.10" fill="#ff1aff"/><rect x="864.36" y="107.20" width="12.1" height="12.10" fill="#ffffff"/><rect x="877.17" y="107.20" width="12.1" height="12.10" fill="#ebebeb"/><rect x="889.98" y="107.20" width="12.1" height="12.10" fill="#dcdcdc"/><rect x="902.79" y="107.20" width="12.1" height="12.10" fill="#d4d4d4"/><rect x="915.60" y="107.20" width="12.1" height="12.10" fill="#c9c9c9"/><rect x="928.41" y="107.20" width="12.1" height="12.10" fill="#bebebe"/><rect x="941.22" y="107.20" width="12.1" height="12.10" fill="#b4b4b4"/><rect x="954.03" y="107.20" width="12.1" height="12.10" fill="#a9a9a9"/><rect x="966.84" y="107.20" width="12.1" height="12.10" fill="#9f9f9f"/><rect x="979.65" y="107.20" width="12.1" height="12.10" fill="#959595"/><rect x="992.46" y="107.20" width="12.1" height="12.10" fill="#ed1c24"/><rect x="787.50" y="120.04" width="12.1" height="12.10" fill="#fff200"/><rect x="800.31" y="120.04" width="12.1" height="12.10" fill="#00a651"/><rect x="813.12" y="120.04" width="12.1" height="12.10" fill="#00aeef"/><rect x="825.93" y="120.04" width="12.1" height="12.10" fill="#2e3192"/><rect x="838.74" y="120.04" width="12.1" height="12.10" fill="#ec008c"/><rect x="851.55" y="120.04" width="12.1" height="12.10" fill="#898989"/><rect x="864.36" y="120.04" width="12.1" height="12.10" fill="#7d7d7d"/><rect x="877.17" y="120.04" width="12.1" height="12.10" fill="#6f6f6f"/><rect x="889.98" y="120.04" width="12.1" height="12.10" fill="#626262"/><rect x="902.79" y="120.04" width="12.1" height="12.10" fill="#555555"/><rect x="915.60" y="120.04" width="12.1" height="12.10" fill="#474747"/><rect x="928.41" y="120.04" width="12.1" height="12.10" fill="#373737"/><rect x="941.22" y="120.04" width="12.1" height="12.10" fill="#262626"/><rect x="954.03" y="120.04" width="12.1" height="12.10" fill="#121212"/><rect x="966.84" y="120.04" width="12.1" height="12.10" fill="#000000"/><rect x="979.65" y="120.04" width="12.1" height="12.10" fill="#f69679"/><rect x="992.46" y="120.04" width="12.1" height="12.10" fill="#f9ad81"/><rect x="787.50" y="132.88" width="12.1" height="12.10" fill="#fdc689"/><rect x="800.31" y="132.88" width="12.1" height="12.10" fill="#fff799"/><rect x="813.12" y="132.88" width="12.1" height="12.10" fill="#c4df9b"/><rect x="825.93" y="132.88" width="12.1" height="12.10" fill="#a3d39c"/><rect x="838.74" y="132.88" width="12.1" height="12.10" fill="#82ca9c"/><rect x="851.55" y="132.88" width="12.1" height="12.10" fill="#7accc8"/><rect x="864.36" y="132.88" width="12.1" height="12.10" fill="#6dcff6"/><rect x="877.17" y="132.88" width="12.1" height="12.10" fill="#7da7d8"/><rect x="889.98" y="132.88" width="12.1" height="12.10" fill="#8393ca"/><rect x="902.79" y="132.88" width="12.1" height="12.10" fill="#8781bd"/><rect x="915.60" y="132.88" width="12.1" height="12.10" fill="#a186be"/><rect x="928.41" y="132.88" width="12.1" height="12.10" fill="#bd8cbf"/><rect x="941.22" y="132.88" width="12.1" height="12.10" fill="#f49ac1"/><rect x="954.03" y="132.88" width="12.1" height="12.10" fill="#f5989d"/><rect x="966.84" y="132.88" width="12.1" height="12.10" fill="#f26c4f"/><rect x="979.65" y="132.88" width="12.1" height="12.10" fill="#f68e56"/><rect x="992.46" y="132.88" width="12.1" height="12.10" fill="#fbaf5d"/><rect x="787.50" y="145.72" width="12.1" height="12.10" fill="#fff568"/><rect x="800.31" y="145.72" width="12.1" height="12.10" fill="#acd373"/><rect x="813.12" y="145.72" width="12.1" height="12.10" fill="#7cc576"/><rect x="825.93" y="145.72" width="12.1" height="12.10" fill="#3cb878"/><rect x="838.74" y="145.72" width="12.1" height="12.10" fill="#1cbbb4"/><rect x="851.55" y="145.72" width="12.1" height="12.10" fill="#00bff3"/><rect x="864.36" y="145.72" width="12.1" height="12.10" fill="#448ccb"/><rect x="877.17" y="145.72" width="12.1" height="12.10" fill="#5674b9"/><rect x="889.98" y="145.72" width="12.1" height="12.10" fill="#605ca8"/><rect x="902.79" y="145.72" width="12.1" height="12.10" fill="#8560a8"/><rect x="915.60" y="145.72" width="12.1" height="12.10" fill="#a864a8"/><rect x="928.41" y="145.72" width="12.1" height="12.10" fill="#f06eaa"/><rect x="941.22" y="145.72" width="12.1" height="12.10" fill="#f26d7d"/><rect x="954.03" y="145.72" width="12.1" height="12.10" fill="#ed1c24"/><rect x="966.84" y="145.72" width="12.1" height="12.10" fill="#f26522"/><rect x="979.65" y="145.72" width="12.1" height="12.10" fill="#f7941d"/><rect x="992.46" y="145.72" width="12.1" height="12.10" fill="#fff200"/><rect x="787.50" y="158.56" width="12.1" height="12.10" fill="#8dc63f"/><rect x="800.31" y="158.56" width="12.1" height="12.10" fill="#39b54a"/><rect x="813.12" y="158.56" width="12.1" height="12.10" fill="#00a651"/><rect x="825.93" y="158.56" width="12.1" height="12.10" fill="#00a99d"/><rect x="838.74" y="158.56" width="12.1" height="12.10" fill="#00aeef"/><rect x="851.55" y="158.56" width="12.1" height="12.10" fill="#0072bc"/><rect x="864.36" y="158.56" width="12.1" height="12.10" fill="#0054a6"/><rect x="877.17" y="158.56" width="12.1" height="12.10" fill="#2e3192"/><rect x="889.98" y="158.56" width="12.1" height="12.10" fill="#662d91"/><rect x="902.79" y="158.56" width="12.1" height="12.10" fill="#92278f"/><rect x="915.60" y="158.56" width="12.1" height="12.10" fill="#ec008c"/><rect x="928.41" y="158.56" width="12.1" height="12.10" fill="#ed145b"/><rect x="941.22" y="158.56" width="12.1" height="12.10" fill="#9e0b0f"/><rect x="954.03" y="158.56" width="12.1" height="12.10" fill="#a0410d"/><rect x="966.84" y="158.56" width="12.1" height="12.10" fill="#a36209"/><rect x="979.65" y="158.56" width="12.1" height="12.10" fill="#aba000"/><rect x="992.46" y="158.56" width="12.1" height="12.10" fill="#598527"/><rect x="787.50" y="171.40" width="12.1" height="12.10" fill="#197b30"/><rect x="800.31" y="171.40" width="12.1" height="12.10" fill="#007236"/><rect x="813.12" y="171.40" width="12.1" height="12.10" fill="#00746b"/><rect x="825.93" y="171.40" width="12.1" height="12.10" fill="#0076a3"/><rect x="838.74" y="171.40" width="12.1" height="12.10" fill="#004a80"/><rect x="851.55" y="171.40" width="12.1" height="12.10" fill="#003471"/><rect x="864.36" y="171.40" width="12.1" height="12.10" fill="#1b1464"/><rect x="877.17" y="171.40" width="12.1" height="12.10" fill="#440e62"/><rect x="889.98" y="171.40" width="12.1" height="12.10" fill="#630460"/><rect x="902.79" y="171.40" width="12.1" height="12.10" fill="#9e005d"/><rect x="915.60" y="171.40" width="12.1" height="12.10" fill="#9e0039"/><rect x="928.41" y="171.40" width="12.1" height="12.10" fill="#790000"/><rect x="941.22" y="171.40" width="12.1" height="12.10" fill="#7b2e00"/><rect x="954.03" y="171.40" width="12.1" height="12.10" fill="#7d4900"/><rect x="966.84" y="171.40" width="12.1" height="12.10" fill="#827b00"/><rect x="979.65" y="171.40" width="12.1" height="12.10" fill="#406618"/><rect x="992.46" y="171.40" width="12.1" height="12.10" fill="#005e20"/><rect x="787.50" y="184.24" width="12.1" height="4.76" fill="#005826"/><rect x="800.31" y="184.24" width="12.1" height="4.76" fill="#005952"/><rect x="813.12" y="184.24" width="12.1" height="4.76" fill="#005b7f"/><rect x="825.93" y="184.24" width="12.1" height="4.76" fill="#003663"/><rect x="838.74" y="184.24" width="12.1" height="4.76" fill="#002157"/><rect x="851.55" y="184.24" width="12.1" height="4.76" fill="#0d004c"/><rect x="864.36" y="184.24" width="12.1" height="4.76" fill="#32004b"/><rect x="877.17" y="184.24" width="12.1" height="4.76" fill="#4b0049"/><rect x="889.98" y="184.24" width="12.1" height="4.76" fill="#7b0046"/><rect x="902.79" y="184.24" width="12.1" height="4.76" fill="#7a0026"/><rect x="915.60" y="184.24" width="12.1" height="4.76" fill="#c7b299"/><rect x="928.41" y="184.24" width="12.1" height="4.76" fill="#998675"/><rect x="941.22" y="184.24" width="12.1" height="4.76" fill="#736357"/><rect x="954.03" y="184.24" width="12.1" height="4.76" fill="#534741"/><rect x="966.84" y="184.24" width="12.1" height="4.76" fill="#37302d"/><rect x="979.65" y="184.24" width="12.1" height="4.76" fill="#c69c6d"/><rect x="992.46" y="184.24" width="12.1" height="4.76" fill="#a67c52"/><rect x="1015.3" y="108.8" width="7.4" height="62" rx="3.7" fill="#686868"/><g fill="none" stroke="#d8d8d8" stroke-width=".9"><path d="M980 193.5h5.4v7.5h-7.5v-5.4z"/><path d="M977.9 195.6h2.1v-2.1"/></g><g fill="none" stroke="#8a8a8a" stroke-width=".9"><path d="M996.5 195h7M998 195v6h4.5v-6M998.8 195v-1.5h2.9v1.5"/></g></svg>
<div class="a" style="left:788px;top:208.8px;width:236px;height:91.2px;background:#535353"></div>
<div class="a" style="left:788px;top:208.8px;width:236px;height:19.8px;background:#434343"></div>
<div class="a" style="left:788px;top:208.8px;width:59px;height:19.8px;background:#535353"></div>
<div class="t" id="t50" style="letter-spacing:-0.310px;left:793.6px;top:216.48px;font-size:8.18px;color:#ececec;font-weight:bold;">Adjustments</div>
<div class="a" style="left:1013.3px;top:215.8px;width:7.5px;height:5.5px;background:#8c8c8c"></div><div class="a" style="left:1013.3px;top:217.10000000000002px;width:7.5px;height:.5px;background:#5c5c5c"></div><div class="a" style="left:1013.3px;top:218.4px;width:7.5px;height:.5px;background:#5c5c5c"></div><div class="a" style="left:1013.3px;top:219.70000000000002px;width:7.5px;height:.5px;background:#5c5c5c"></div>
<div class="t" id="t51" style="letter-spacing:-0.251px;left:793.6px;top:232.97px;font-size:8.00px;color:#e0e0e0;font-weight:bold;">Add an adjustment</div>
<svg style="left:0;top:0" width="1024" height="606"><g fill="none" stroke="#e0e0e0" stroke-width=".9"><circle cx="827.3" cy="250.6" r="3.3"/><path d="M831.90 250.60L833.20 250.60"/><path d="M830.55 253.85L831.47 254.77"/><path d="M827.30 255.20L827.30 256.50"/><path d="M824.05 253.86L823.13 254.78"/><path d="M822.70 250.61L821.40 250.61"/><path d="M824.04 247.35L823.12 246.44"/><path d="M827.29 246.00L827.29 244.70"/><path d="M830.54 247.34L831.46 246.42"/></g><g fill="#e0e0e0"><path d="M827.3 247.29999999999998a3.3 3.3 0 0 1 0 6.6z"/><path d="M838.2 255.6v-3l1.2-1.5.8 1 1-3 1 1.5 1-4 1 3 1-2 1 2.5 1-3.5 1 3 .8-1.5 1 2.5v5.5z"/></g><g fill="none" stroke="#e0e0e0" stroke-width=".9"><rect x="856.3" y="245.6" width="11" height="10"/><path d="M856.3 255.6c4-1 6-8 11-10" /><path d="M860 245.6v10M863.6 245.6v10M856.3 248.9h11M856.3 252.2h11" stroke="#888" stroke-width=".6"/><rect x="873.3" y="245.6" width="11.3" height="10"/><path d="M873.3 255.6l11.3-10v10z" fill="#e0e0e0"/><path d="M875 248.1h2.5M876.2 246.9v2.5M880.5 253.4h2.5" stroke="#e0e0e0"/><path d="M891 245.6h10l-5 10z"/><path d="M893.5 247.1h5l-2.5 5z" fill="#9a9a9a" stroke="none"/><rect x="813.3" y="265.0" width="11.5" height="9.6"/><path d="M813.3 269.0h11.5M816.8 265.0v4M820.3 265.0v4"/><path d="M836 265.3v1.5M831 266.8h10M831.5 266.8l-1.5 4M831.5 266.8l1.5 4M840.5 266.8l-1.5 4M840.5 266.8l1.5 4"/><rect x="847.2" y="265.0" width="11.6" height="9.6"/><path d="M864.5 267.3h2.5l1-1.5h3l1 1.5h2.5v6h-10z"/><circle cx="868.7" cy="270.1" r="1.8"/><circle cx="873.8" cy="272.8" r="2.4"/><circle cx="887" cy="268.2" r="3.2"/><circle cx="885" cy="271.40000000000003" r="3.2"/><circle cx="889" cy="271.40000000000003" r="3.2"/><rect x="898.3" y="265.0" width="11.5" height="9.6"/><path d="M898.3 268.2h11.5M898.3 271.40000000000003h11.5M902.1 265.0v9.6M906 265.0v9.6"/></g><g fill="#e0e0e0"><path d="M813.3 269.0h11.5v5.6h-11.5z" opacity=".8"/><path d="M830 270.8h3a1.5 1.5 0 0 1-3 0zM839 270.8h3a1.5 1.5 0 0 1-3 0z"/><rect x="853" y="265.0" width="5.8" height="9.6"/><path d="M881.8 271.40000000000003a3.2 3.2 0 0 0 6.4 0z" opacity=".6"/></g><g fill="none" stroke="#e0e0e0" stroke-width=".9"><rect x="821.3" y="284" width="11.8" height="10"/><rect x="838.7" y="284" width="11.8" height="10"/><rect x="856" y="284" width="11.8" height="10"/><rect x="873" y="284" width="11.8" height="10"/><rect x="890" y="284" width="11.8" height="10"/><path d="M823.5 292.5c2-5 4-7 7.5-7" stroke-width="1.4"/><circle cx="827.2" cy="289" r="2.5"/><path d="M838.7 291l9-7M841 294l9-7.5" stroke-width="1.2"/><path d="M856 291l2.5-1.5 1.5 1 2.5-3 2 1 3.5-2.5" stroke-width="1.8"/><path d="M873 284l5.9 5 5.9-5M873 294l5.9-5 5.9 5"/></g><defs><linearGradient id="gm" x1="0" x2="1"><stop offset="0" stop-color="#111"/><stop offset="1" stop-color="#eee"/></linearGradient></defs><rect x="891" y="284.7" width="10" height="8.6" fill="url(#gm)"/></svg>
<div class="a" style="left:788px;top:302.5px;width:236px;height:303.5px;background:#535353"></div>
<div class="a" style="left:788px;top:302.5px;width:236px;height:20.2px;background:#434343"></div>
<div class="a" style="left:788px;top:302.5px;width:37px;height:20.2px;background:#535353"></div>
<div class="a" style="left:825px;top:302.5px;width:46px;height:20.2px;background:#474747"></div>
<div class="a" style="left:871px;top:302.5px;width:33.4px;height:20.2px;background:#474747;border-left:1px solid #404040"></div>
<div class="t" id="t52" style="transform:scaleX(0.8915);transform-origin:0 0;left:793.5px;top:310.38px;font-size:8.18px;color:#ececec;font-weight:bold;">Layers</div>
<div class="t" id="t53" style="transform:scaleX(0.9186);transform-origin:0 0;left:831.2px;top:310.38px;font-size:8.18px;color:#b4b4b4;font-weight:bold;">Channels</div>
<div class="t" id="t54" style="transform:scaleX(0.9117);transform-origin:0 0;left:877.8px;top:310.38px;font-size:8.18px;color:#b4b4b4;font-weight:bold;">Paths</div>
<div class="a" style="left:1013.3px;top:310.5px;width:7.5px;height:5.5px;background:#8c8c8c"></div><div class="a" style="left:1013.3px;top:311.8px;width:7.5px;height:.5px;background:#5c5c5c"></div><div class="a" style="left:1013.3px;top:313.1px;width:7.5px;height:.5px;background:#5c5c5c"></div><div class="a" style="left:1013.3px;top:314.4px;width:7.5px;height:.5px;background:#5c5c5c"></div>
<div class="a" style="left:790.6px;top:329.5px;width:63.4px;height:12.5px;background:#474747;border-radius:2px;border:1px solid #4d4d4d"></div>
<svg style="left:795px;top:331.8px" width="8" height="8" viewBox="0 0 8 8"><circle cx="4.8" cy="3.2" r="2.5" fill="none" stroke="#dcdcdc" stroke-width=".9"/><path d="M3 5L.6 7.4" stroke="#dcdcdc" stroke-width="1.1"/></svg>
<div class="t" id="t55" style="letter-spacing:0.495px;left:805px;top:331.97px;font-size:8.00px;color:#e0e0e0;">Kind</div>
<svg style="left:846.5px;top:334.7px" width="5" height="3.5" viewBox="0 0 5 3.5"><path d="M.4.4L2.5 2.8 4.6.4" fill="none" stroke="#cfcfcf" stroke-width=".9"/></svg>
<svg style="left:0;top:0" width="1024" height="606"><g fill="none" stroke="#d6d6d6" stroke-width=".9"><rect x="861.8" y="331.5" width="8.6" height="7.6"/><path d="M863 337.5l1.8-2 1.2 1 1.5-2 1.7 3z" fill="#d6d6d6" stroke="none"/><circle cx="882.7" cy="335.7" r="3.8"/><path d="M882.7 331.9a3.8 3.8 0 0 1 0 7.6z" fill="#d6d6d6"/><rect x="913.8" y="332.2" width="7.5" height="7" /><path d="M912.8 331.2h1.8v1.8h-1.8zM920.6 331.2h1.8v1.8h-1.8zM912.8 338.6h1.8v1.8h-1.8zM920.6 338.6h1.8v1.8h-1.8z" fill="#d6d6d6"/><path d="M931.5 337v-2.5h5v5.5h-5zM933 334.5v-1.5a1.5 1.5 0 0 1 3 0" /><path d="M933.5 333l2.5-1.5 2.5 1.5v4.5h-2" /></g><g fill="#d6d6d6"><path d="M896 331.2h9v2.2h-.8l-.4-1h-2.5v6.5l1 .4v.6h-3.6v-.6l1-.4v-6.5h-2.5l-.4 1h-.8z"/><rect x="948.7" y="336" width="4.8" height="7" rx="2.4" fill="#444" stroke="#5a5a5a" stroke-width=".6"/><circle cx="951.1" cy="333.5" r="2.4" fill="#e6e6e6"/></g></svg>
<div class="a" style="left:788px;top:345px;width:236px;height:1px;background:#4a4a4a"></div>
<div class="a" style="left:790.6px;top:349.2px;width:93.4px;height:12px;background:#474747;border-radius:2px;border:1px solid #4d4d4d"></div>
<div class="t" id="t56" style="letter-spacing:-0.256px;left:794.5px;top:351.47px;font-size:8.00px;color:#e0e0e0;">Normal</div>
<svg style="left:876.5px;top:354.3px" width="5" height="3.5" viewBox="0 0 5 3.5"><path d="M.4.4L2.5 2.8 4.6.4" fill="none" stroke="#cfcfcf" stroke-width=".9"/></svg>
<div class="t" id="t57" style="letter-spacing:-0.049px;left:887.5px;top:351.47px;font-size:8.00px;color:#cfcfcf;">Opacity:</div>
<div class="a" style="left:918.5px;top:348.8px;width:24.5px;height:12.6px;background:#474747;border:1px solid #4d4d4d;border-radius:2px 0 0 2px"></div>
<div class="a" style="left:943px;top:348.8px;width:11px;height:12.6px;background:#474747;border:1px solid #4d4d4d;border-radius:0 2px 2px 0"></div>
<div class="t" id="t58" style="transform:scaleX(0.9282);transform-origin:0 0;left:920.3px;top:351.47px;font-size:8.00px;color:#e0e0e0;">100%</div>
<svg style="left:946.3px;top:354.3px" width="5" height="3.5" viewBox="0 0 5 3.5"><path d="M.4.4L2.5 2.8 4.6.4" fill="none" stroke="#cfcfcf" stroke-width=".9"/></svg>
<div class="a" style="left:788px;top:364.5px;width:236px;height:1px;background:#4a4a4a"></div>
<div class="t" id="t59" style="letter-spacing:-0.281px;left:791px;top:371.27px;font-size:8.00px;color:#cfcfcf;">Lock:</div>
<svg style="left:0;top:0" width="1024" height="606"><g fill="#d6d6d6"><rect x="814" y="370" width="8" height="8" fill="none" stroke="#d6d6d6" stroke-width=".8"/><rect x="814" y="370" width="2" height="2"/><rect x="814" y="374" width="2" height="2"/><rect x="816" y="372" width="2" height="2"/><rect x="816" y="376" width="2" height="2"/><rect x="818" y="370" width="2" height="2"/><rect x="818" y="374" width="2" height="2"/><rect x="820" y="372" width="2" height="2"/><rect x="820" y="376" width="2" height="2"/><path d="M839 369l.8.8-4 5-1.6-1.4z"/><path d="M833.8 374.3c.8.2 1.5 1 1.1 2-.5 1.2-2 2-4 2.2.6-.8.5-1.7.8-2.5.4-1.1 1.2-1.8 2.1-1.7z"/><path d="M849 368.6l1.6 1.8h-3.2zM849 379.6l1.6-1.8h-3.2zM843.5 374.1l1.8 1.6v-3.2zM854.5 374.1l-1.8 1.6v-3.2z"/><rect x="848.6" y="370" width=".8" height="8.2"/><rect x="844.9" y="373.7" width="8.2" height=".8"/><path d="M877.3 373h7.2v6.2h-7.2z"/></g><g fill="none" stroke="#d6d6d6" stroke-width=".9"><path d="M861 371.5h8v6.5h-8zM862.5 369.5v9.5M867.5 370v9.5M859.5 373h11" stroke-width=".8"/><path d="M878.8 373v-1.8a2.1 2.1 0 0 1 4.2 0v1.8" stroke-width="1.1"/></g></svg>
<div class="t" id="t60" style="letter-spacing:-0.113px;left:904.6px;top:371.27px;font-size:8.00px;color:#cfcfcf;">Fill:</div>
<div class="a" style="left:918.5px;top:368px;width:24.5px;height:12.6px;background:#474747;border:1px solid #4d4d4d;border-radius:2px 0 0 2px"></div>
<div class="a" style="left:943px;top:368px;width:11px;height:12.6px;background:#474747;border:1px solid #4d4d4d;border-radius:0 2px 2px 0"></div>
<div class="t" id="t61" style="transform:scaleX(0.9282);transform-origin:0 0;left:920.3px;top:371.27px;font-size:8.00px;color:#e0e0e0;">100%</div>
<svg style="left:946.3px;top:373.5px" width="5" height="3.5" viewBox="0 0 5 3.5"><path d="M.4.4L2.5 2.8 4.6.4" fill="none" stroke="#cfcfcf" stroke-width=".9"/></svg>
<div class="a" style="left:788px;top:383.5px;width:236px;height:1.5px;background:#4a4a4a"></div>
<div class="a" style="left:788px;top:384.5px;width:236px;height:203px;background:#4c4c4c"></div>
<div class="a" style="left:1014px;top:384.5px;width:10px;height:203px;background:#494949"></div>
<div class="a" style="left:788px;top:385.2px;width:226px;height:18px;background:#676767"></div>
<div class="a" style="left:788px;top:403.2px;width:226px;height:1px;background:#4a4a4a"></div>
<svg style="left:793px;top:391.5px" width="10" height="6" viewBox="0 0 10 6"><path d="M.5 3C2.5.2 7.5.2 9.5 3 7.5 5.8 2.5 5.8.5 3z" fill="none" stroke="#e8e8e8" stroke-width=".9"/><circle cx="5" cy="3" r="1.6" fill="#e8e8e8"/></svg>
<svg style="left:0;top:0" width="1024" height="606"><g fill="none" stroke="#e2e2e2" stroke-width="1.1"><path d="M810.6 391v-4.7h9M826.5 386.3h9v4.7M835.5 397v4.7h-9M819.6 401.7h-9V397"/></g><rect x="812.3" y="387.4" width="22.2" height="13" fill="#5ec38a" stroke="#2e2e2e" stroke-width="1"/><rect x="821" y="390" width="4.6" height="9" fill="#b8bcc0"/><rect x="819" y="393.2" width="1.8" height="3" fill="#4aa6d8"/><rect x="825.8" y="393.2" width="1.8" height="3" fill="#4aa6d8"/><rect x="822" y="394" width="2.6" height="3" fill="#c81818"/></svg>
<div class="t" id="t62" style="letter-spacing:-0.312px;left:840.4px;top:390.78px;font-size:8.18px;color:#ececec;">Local Robot</div>
<div class="a" style="left:788px;top:587px;width:236px;height:19px;background:#4a4a4a;border-top:1px solid #404040"></div>
<svg style="left:0;top:0" width="1024" height="606"><g fill="none" stroke="#8a8a8a" stroke-width=".9"><path d="M883.5 594h-1.3a2.2 2.2 0 0 0 0 4.4h1.3M886.5 594h1.3a2.2 2.2 0 0 1 0 4.4h-1.3M883.2 596.2h3.6"/></g><g fill="#dcdcdc"><text x="900.5" y="599.5" font-family="Liberation Serif" font-style="italic" font-size="10" fill="#dcdcdc">fx</text><path d="M908.5 602.5h2.4l-1.2 1.2z"/><path d="M919.5 592.5h8v7h-8zM923.5 594a2 2 0 1 0 0 4 2 2 0 1 0 0-4z" fill-rule="evenodd"/><path d="M942.7 592.2a3.9 3.9 0 1 0 0 7.8 3.9 3.9 0 1 0 0-7.8zM939.9 598.9l5.6-5.6a3 3 0 0 0-5.6 5.6z" fill-rule="evenodd"/><path d="M946.5 602.5h2.4l-1.2 1.2z"/><path d="M957.5 592.5h3l.8.9h4.8v6.3h-8.6z"/></g><g fill="none" stroke="#dcdcdc" stroke-width=".9"><path d="M978.8 592.5h5.4v7.3h-7.4v-5.3z"/><path d="M976.8 594.5h2v-2M980.5 596.2v1.8h-1.8"/></g><g fill="none" stroke="#8a8a8a" stroke-width=".9"><path d="M996.6 593.5h7M998 593.5v6.3h4.5v-6.3M998.8 593.5v-1.3h2.9v1.3"/></g></svg>
</body></html>
